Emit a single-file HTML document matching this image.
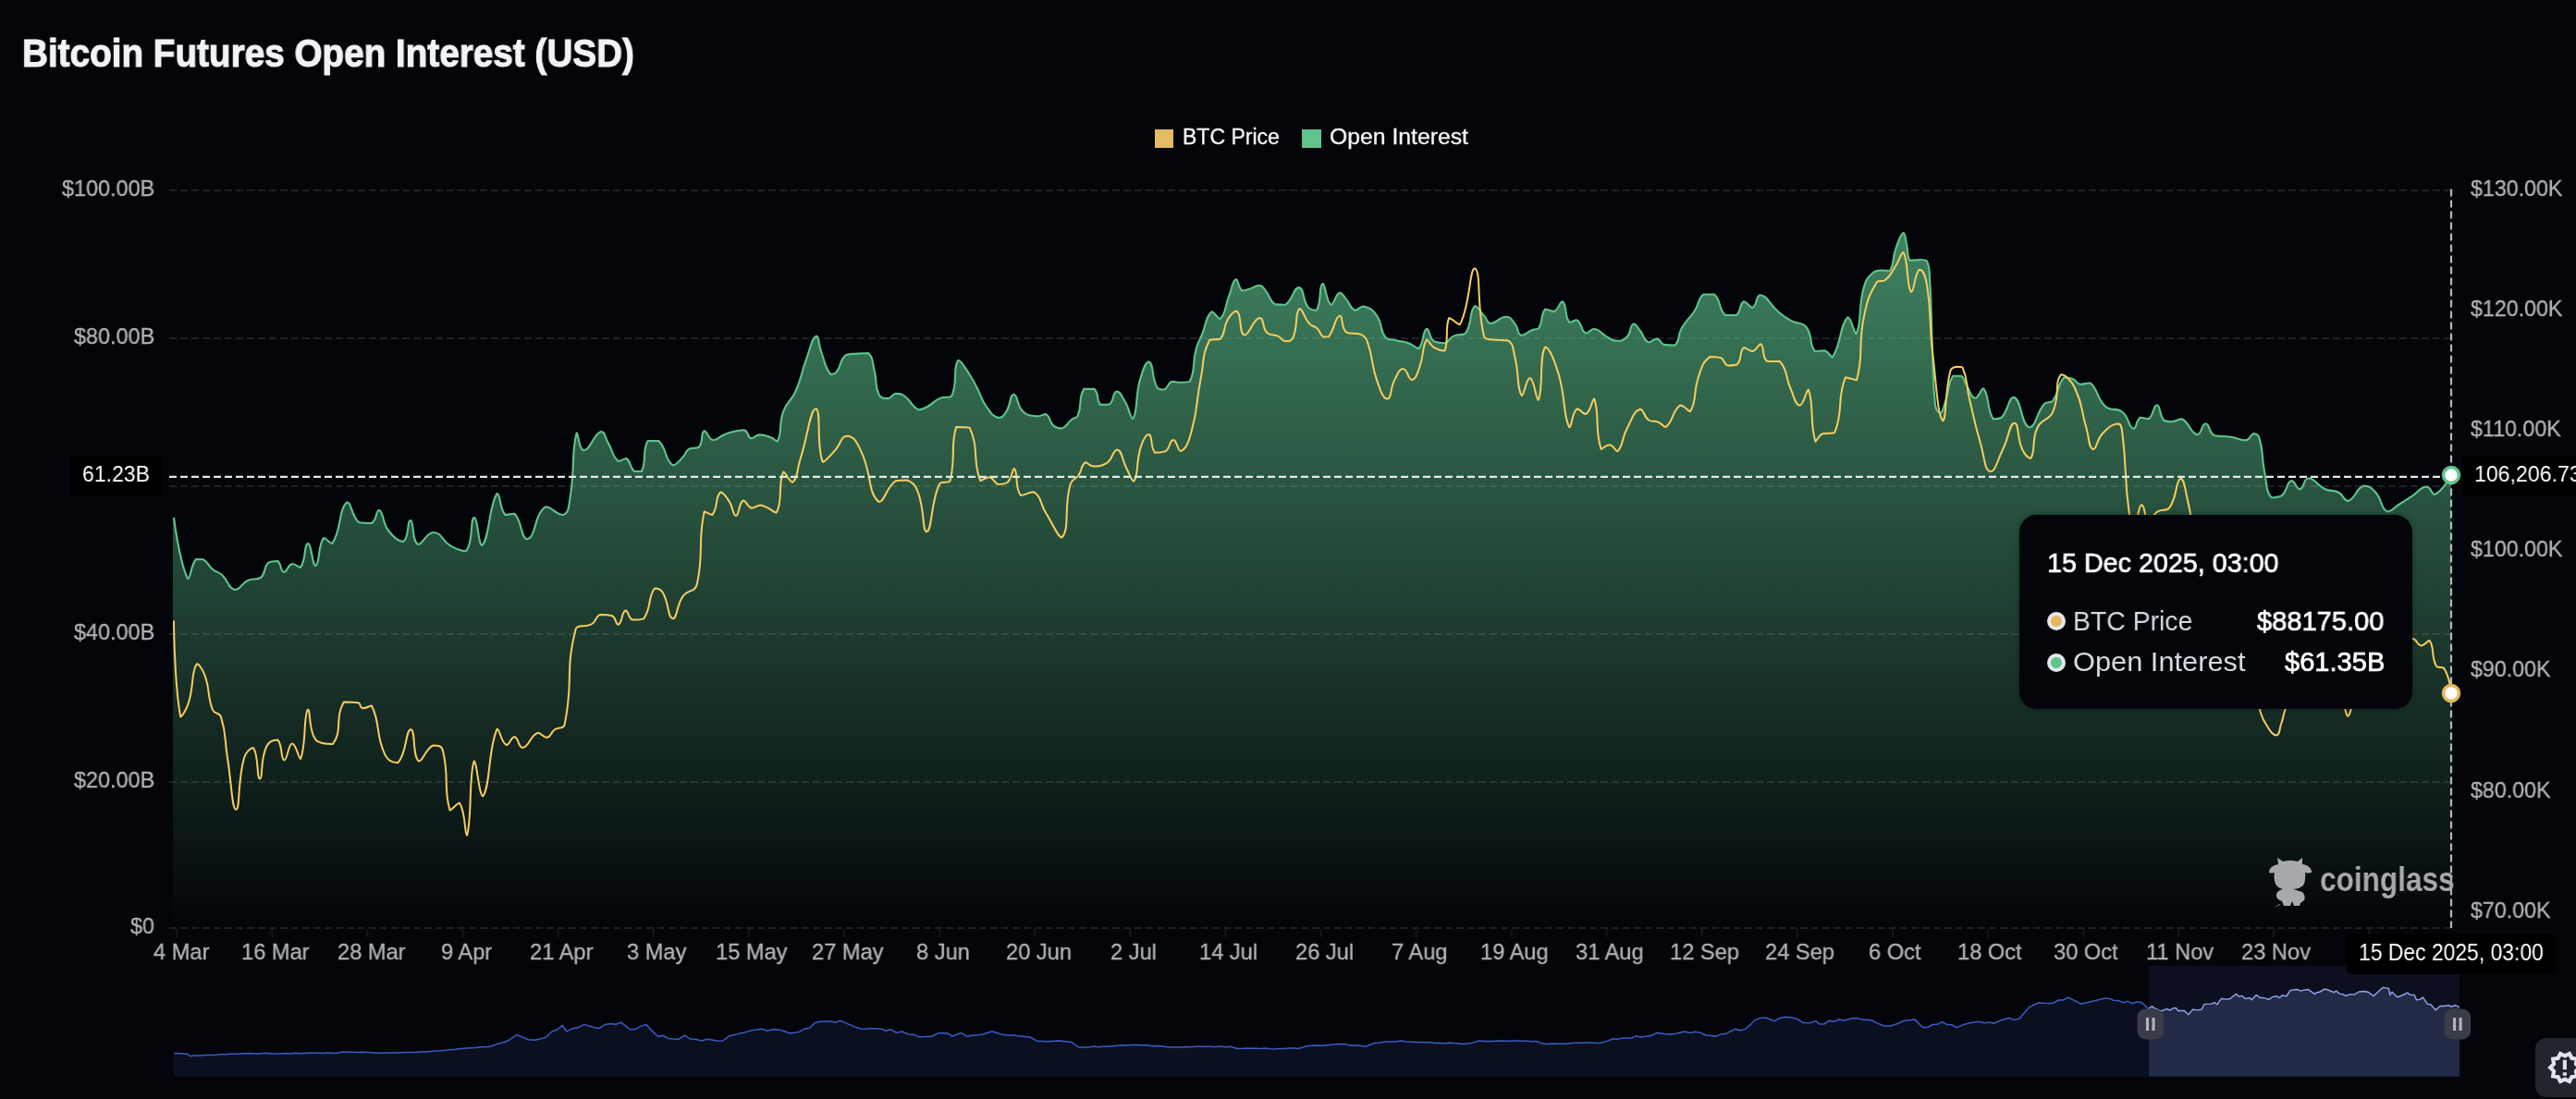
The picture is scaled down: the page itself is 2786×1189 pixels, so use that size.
<!DOCTYPE html>
<html><head><meta charset="utf-8"><style>
html,body{margin:0;padding:0;background:#03050a;width:2786px;height:1189px;overflow:hidden;position:relative;}
*{box-sizing:border-box;}
.t{position:absolute;font-family:"Liberation Sans",sans-serif;white-space:nowrap;line-height:1;will-change:transform;}
</style></head><body>
<svg width="2786" height="1189" viewBox="0 0 2786 1189" style="position:absolute;left:0;top:0"><defs><linearGradient id="oig" x1="0" y1="252" x2="0" y2="1004.2" gradientUnits="userSpaceOnUse"><stop offset="0" stop-color="#5ec48c" stop-opacity="0.66"/><stop offset="1" stop-color="#5ec48c" stop-opacity="0.0"/></linearGradient><clipPath id="selclip"><rect x="2324" y="1045" width="336.2" height="120"/></clipPath><clipPath id="unselclip"><rect x="180" y="1030" width="2144" height="140"/></clipPath></defs><line x1="183" y1="206" x2="2655" y2="206" stroke="#1e2025" stroke-width="2" stroke-dasharray="8 4"/><line x1="183" y1="366" x2="2655" y2="366" stroke="#1e2025" stroke-width="2" stroke-dasharray="8 4"/><line x1="183" y1="526" x2="2655" y2="526" stroke="#1e2025" stroke-width="2" stroke-dasharray="8 4"/><line x1="183" y1="686" x2="2655" y2="686" stroke="#1e2025" stroke-width="2" stroke-dasharray="8 4"/><line x1="183" y1="846" x2="2655" y2="846" stroke="#1e2025" stroke-width="2" stroke-dasharray="8 4"/><line x1="183" y1="1004" x2="2655" y2="1004" stroke="#1e2025" stroke-width="2" stroke-dasharray="8 4"/><line x1="191.2" y1="1005" x2="191.2" y2="1014" stroke="#14161a" stroke-width="2"/><line x1="294.3" y1="1005" x2="294.3" y2="1014" stroke="#14161a" stroke-width="2"/><line x1="397.4" y1="1005" x2="397.4" y2="1014" stroke="#14161a" stroke-width="2"/><line x1="500.5" y1="1005" x2="500.5" y2="1014" stroke="#14161a" stroke-width="2"/><line x1="603.6" y1="1005" x2="603.6" y2="1014" stroke="#14161a" stroke-width="2"/><line x1="706.7" y1="1005" x2="706.7" y2="1014" stroke="#14161a" stroke-width="2"/><line x1="809.8" y1="1005" x2="809.8" y2="1014" stroke="#14161a" stroke-width="2"/><line x1="912.9" y1="1005" x2="912.9" y2="1014" stroke="#14161a" stroke-width="2"/><line x1="1016.0" y1="1005" x2="1016.0" y2="1014" stroke="#14161a" stroke-width="2"/><line x1="1119.1" y1="1005" x2="1119.1" y2="1014" stroke="#14161a" stroke-width="2"/><line x1="1222.2" y1="1005" x2="1222.2" y2="1014" stroke="#14161a" stroke-width="2"/><line x1="1325.3" y1="1005" x2="1325.3" y2="1014" stroke="#14161a" stroke-width="2"/><line x1="1428.4" y1="1005" x2="1428.4" y2="1014" stroke="#14161a" stroke-width="2"/><line x1="1531.5" y1="1005" x2="1531.5" y2="1014" stroke="#14161a" stroke-width="2"/><line x1="1634.6" y1="1005" x2="1634.6" y2="1014" stroke="#14161a" stroke-width="2"/><line x1="1737.7" y1="1005" x2="1737.7" y2="1014" stroke="#14161a" stroke-width="2"/><line x1="1840.8" y1="1005" x2="1840.8" y2="1014" stroke="#14161a" stroke-width="2"/><line x1="1943.9" y1="1005" x2="1943.9" y2="1014" stroke="#14161a" stroke-width="2"/><line x1="2047.0" y1="1005" x2="2047.0" y2="1014" stroke="#14161a" stroke-width="2"/><line x1="2150.1" y1="1005" x2="2150.1" y2="1014" stroke="#14161a" stroke-width="2"/><line x1="2253.2" y1="1005" x2="2253.2" y2="1014" stroke="#14161a" stroke-width="2"/><line x1="2356.3" y1="1005" x2="2356.3" y2="1014" stroke="#14161a" stroke-width="2"/><line x1="2459.4" y1="1005" x2="2459.4" y2="1014" stroke="#14161a" stroke-width="2"/><line x1="2562.5" y1="1005" x2="2562.5" y2="1014" stroke="#14161a" stroke-width="2"/><path d="M188.0,560.0C188.0,560.0 194.2,609.4 203.2,626.2C206.2,626.2 205.8,612.7 212.0,605.0C214.2,605.0 216.8,605.0 220.0,605.3C225.8,608.9 224.4,611.4 230.0,616.0C234.4,619.7 235.7,618.1 240.0,622.0C247.7,629.1 246.3,636.3 254.0,638.0C260.3,638.0 260.4,631.5 268.0,628.0C274.4,625.0 277.1,628.0 282.0,625.0C288.1,619.7 284.3,614.7 290.0,609.0C293.3,607.0 296.4,607.0 300.0,607.0C304.9,609.9 302.8,618.2 307.0,619.0C310.8,619.0 310.9,611.4 316.0,610.0C319.9,610.0 322.7,614.0 325.0,614.0C331.2,605.9 328.8,588.5 333.0,588.0C337.0,588.0 337.6,612.0 341.4,612.0C346.1,610.3 343.4,590.8 350.0,582.0C352.4,582.0 357.0,588.0 359.4,588.0C369.7,572.3 366.0,550.8 375.4,543.3C380.3,543.3 379.5,557.7 388.0,565.0C392.8,566.0 396.9,566.0 402.0,566.0C407.9,562.5 406.4,552.0 410.0,552.0C415.4,554.4 412.9,564.7 420.0,574.0C425.9,581.7 430.6,586.0 436.0,586.0C442.6,583.0 440.2,563.0 444.0,563.0C448.2,563.8 445.0,585.4 452.0,589.0C457.5,589.0 460.6,576.0 469.0,576.0C478.3,576.4 477.4,584.9 487.5,590.7C494.9,595.0 500.0,596.3 504.0,596.3C512.6,585.8 508.0,561.7 512.8,560.0C516.8,560.0 517.2,590.0 521.5,590.0C529.6,581.5 528.9,545.6 537.7,534.0C541.4,534.0 539.8,549.3 546.4,557.0C549.2,557.0 553.5,555.7 556.5,555.7C565.5,565.5 563.1,583.2 570.4,583.2C579.9,581.1 577.3,556.9 590.0,548.3C596.6,548.3 601.9,557.0 608.9,557.0C615.0,555.2 614.8,549.3 616.3,540.4C622.2,505.0 617.7,489.2 623.7,468.4C625.4,468.4 626.0,487.2 631.6,487.2C639.1,486.8 641.5,469.6 650.0,467.0C654.6,467.0 654.1,473.0 657.8,479.3C663.5,489.0 661.7,493.1 668.7,499.0C671.5,499.0 674.3,496.0 677.4,496.0C682.9,499.5 680.4,505.3 686.0,510.0C688.7,510.0 692.6,510.0 694.0,510.0C699.9,496.7 694.0,489.2 700.6,477.0C703.0,477.0 708.6,477.0 712.4,477.0C722.1,486.5 718.6,497.3 727.6,503.3C731.7,503.3 733.7,499.5 738.6,494.6C742.4,490.8 740.7,488.6 745.0,485.9C749.4,483.7 752.8,485.9 756.0,483.7C761.2,477.6 757.3,468.3 761.7,466.2C765.0,466.2 765.8,475.3 771.3,476.2C777.1,476.2 777.5,472.0 784.4,469.7C794.2,466.5 795.8,465.2 804.7,465.2C809.8,466.0 807.8,472.9 812.3,474.3C816.0,474.3 816.5,470.8 821.1,470.4C826.7,470.4 827.2,470.7 832.6,472.7C837.0,474.3 839.2,477.6 840.8,477.6C846.5,466.8 841.7,460.3 847.3,444.9C851.5,433.3 855.4,434.9 860.4,423.5C867.7,407.0 865.6,406.1 871.9,389.1C876.7,376.1 877.8,366.0 882.7,363.6C886.0,363.6 885.1,372.4 888.3,381.0C892.8,393.1 891.7,396.5 898.1,404.9C899.9,404.9 902.6,404.9 904.7,402.3C910.8,394.6 907.5,390.2 914.5,384.2C919.0,382.6 921.0,383.2 927.6,382.6C933.3,382.1 935.8,382.0 939.1,382.0C944.8,387.7 943.2,391.1 945.6,400.6C948.9,413.5 945.6,415.9 950.5,426.8C952.6,431.1 955.6,431.1 960.4,431.1C964.7,430.9 964.2,426.4 968.6,425.8C973.2,425.8 974.4,425.8 978.4,428.5C986.6,434.3 984.9,439.4 993.1,443.2C997.2,443.2 998.4,442.4 1003.0,440.0C1009.9,436.3 1009.0,434.2 1016.1,431.1C1022.1,428.5 1026.6,431.1 1029.2,428.5C1036.4,413.1 1029.9,397.4 1036.4,389.8C1039.7,389.8 1043.2,397.2 1048.8,405.5C1053.5,412.5 1053.1,412.8 1057.0,420.3C1062.1,430.1 1060.5,431.2 1066.9,440.0C1072.0,447.1 1073.3,450.3 1080.0,452.0C1083.9,452.0 1085.4,449.8 1088.2,445.5C1093.6,437.2 1091.9,426.9 1096.4,426.8C1100.9,426.8 1099.2,438.3 1106.2,444.9C1111.7,450.1 1113.7,449.4 1121.5,450.4C1126.3,450.4 1127.7,448.1 1131.3,448.1C1136.7,451.3 1134.2,456.2 1139.5,460.9C1142.9,463.5 1144.8,463.5 1148.7,463.5C1154.6,461.3 1153.6,458.2 1159.1,453.7C1162.1,451.3 1164.3,453.1 1165.7,449.7C1170.9,436.7 1165.8,431.3 1172.3,420.9C1174.8,420.9 1180.2,420.9 1183.7,420.9C1189.2,426.1 1185.0,432.6 1190.3,437.9C1193.2,437.9 1196.8,437.9 1200.1,437.3C1205.4,432.9 1203.2,424.4 1207.6,423.5C1211.4,423.5 1213.0,428.1 1216.5,434.0C1221.8,442.9 1222.6,453.0 1225.3,453.0C1230.8,445.3 1227.2,431.4 1232.9,411.1C1235.9,400.6 1238.7,391.4 1242.7,391.4C1248.0,393.7 1245.0,407.5 1251.5,419.3C1253.2,421.5 1256.0,421.5 1259.1,421.5C1263.9,419.5 1262.4,414.8 1267.3,412.7C1271.4,412.7 1272.2,413.7 1277.1,413.7C1282.0,413.7 1285.1,413.7 1286.9,412.7C1293.3,398.9 1289.1,395.2 1293.5,378.3C1295.7,369.8 1296.6,370.0 1300.0,361.9C1305.1,349.5 1303.7,343.2 1310.5,337.3C1313.5,337.3 1316.8,344.9 1319.7,344.9C1326.3,338.6 1324.4,332.0 1329.5,319.3C1332.9,310.7 1332.7,303.7 1336.7,302.3C1339.6,302.3 1338.8,311.0 1343.3,314.4C1345.8,314.4 1347.1,313.9 1350.8,312.8C1356.6,311.1 1357.0,308.8 1362.3,308.8C1366.0,309.1 1366.1,311.1 1368.8,314.4C1374.3,321.2 1372.2,324.4 1378.7,329.1C1382.9,329.8 1385.9,329.8 1390.1,329.8C1399.0,323.7 1398.7,311.1 1404.9,311.1C1411.0,311.7 1408.0,323.7 1414.7,332.4C1417.5,335.7 1421.9,335.7 1423.9,335.7C1429.8,326.1 1426.1,308.5 1430.4,306.9C1433.9,306.9 1433.9,326.8 1439.5,329.8C1443.1,329.8 1443.8,318.6 1448.9,316.8C1452.1,316.8 1452.7,320.1 1456.0,323.9C1461.0,329.6 1459.9,333.5 1465.5,335.7C1469.3,335.7 1470.5,331.4 1474.9,331.4C1482.3,333.3 1484.3,334.7 1489.1,341.6C1496.1,351.7 1491.4,356.2 1498.6,365.3C1502.0,368.4 1504.5,366.9 1510.4,368.4C1517.5,370.1 1517.8,369.2 1524.6,371.7C1529.7,373.6 1531.1,377.1 1534.1,377.1C1540.4,371.7 1538.1,358.1 1543.1,355.8C1546.4,355.8 1545.2,365.0 1550.7,369.3C1554.9,371.2 1557.2,371.2 1562.5,371.2C1567.9,369.8 1566.6,366.1 1572.0,363.6C1577.9,360.8 1581.5,363.6 1585.0,360.5C1593.1,349.1 1588.3,337.4 1595.1,331.0C1598.3,331.0 1600.2,336.2 1605.1,341.6C1608.8,345.6 1607.7,349.7 1612.2,349.9C1619.5,349.9 1620.9,342.8 1628.7,342.8C1633.9,342.8 1634.5,345.4 1638.2,349.9C1642.8,355.5 1640.3,361.0 1645.3,362.9C1649.8,362.9 1651.0,359.5 1657.1,357.0C1660.5,355.6 1662.4,357.0 1664.2,355.1C1669.5,346.7 1665.6,340.8 1671.3,334.5C1673.9,334.5 1677.0,336.9 1680.8,336.9C1686.2,334.5 1686.7,326.2 1689.8,326.2C1695.0,329.9 1691.5,341.3 1697.3,348.7C1699.4,348.7 1702.6,346.3 1705.6,346.3C1711.5,350.2 1709.2,357.6 1715.1,360.5C1718.7,360.5 1720.0,355.8 1724.5,355.8C1731.2,356.9 1730.8,360.4 1737.5,364.1C1742.6,366.9 1742.8,368.7 1748.2,368.8C1753.8,368.8 1755.5,368.6 1759.5,364.6C1764.7,359.4 1762.3,352.6 1766.6,350.4C1769.4,350.4 1770.6,353.6 1773.7,357.5C1778.6,363.6 1777.0,367.8 1782.6,370.5C1786.2,370.5 1787.7,366.5 1792.1,366.5C1796.3,367.1 1795.3,371.3 1799.7,372.9C1805.0,373.6 1808.0,373.6 1811.5,373.6C1817.4,368.1 1813.8,363.7 1818.6,355.2C1824.4,345.0 1826.4,346.1 1832.8,336.2C1838.2,327.8 1835.6,324.1 1842.3,318.5C1846.2,318.5 1850.4,318.5 1854.1,318.5C1862.2,326.2 1857.8,333.3 1865.9,341.0C1869.6,341.0 1873.6,341.0 1877.7,341.0C1883.6,336.7 1880.7,328.8 1886.0,326.3C1889.6,326.3 1891.8,332.7 1895.5,332.7C1900.7,330.6 1898.6,319.2 1903.8,319.2C1912.2,320.4 1912.8,328.4 1922.7,336.7C1929.4,342.3 1929.3,342.6 1936.9,346.9C1944.7,351.3 1948.4,347.5 1953.5,354.0C1961.4,364.0 1955.7,370.9 1962.9,380.0C1965.7,380.0 1968.9,379.3 1973.6,379.3C1978.4,380.9 1979.4,386.4 1981.8,386.4C1991.8,371.8 1989.4,352.1 1998.4,343.3C2002.3,343.3 2005.1,361.1 2007.6,361.1C2013.9,349.1 2009.0,334.5 2016.0,310.1C2018.7,300.9 2020.2,300.0 2027.0,294.0C2030.2,292.5 2031.5,292.8 2036.0,292.5C2040.0,292.5 2042.2,293.0 2044.0,293.0C2049.2,284.6 2046.1,281.2 2050.0,270.0C2053.3,260.7 2054.8,253.8 2058.5,252.0C2060.8,252.0 2060.5,257.9 2062.0,264.0C2064.1,272.9 2062.0,276.6 2065.7,282.0C2068.2,282.0 2070.9,281.0 2076.0,281.0C2080.0,281.1 2082.3,281.0 2084.0,282.4C2087.0,288.9 2086.5,291.1 2087.0,300.0C2089.5,339.9 2088.3,340.0 2090.0,380.0C2091.3,409.0 2090.0,409.7 2093.0,438.0C2093.7,443.2 2096.3,447.0 2098.6,447.0C2102.1,445.3 2102.1,439.8 2104.6,432.2C2108.8,419.6 2105.9,416.2 2112.0,406.7C2114.1,406.7 2117.9,406.7 2121.1,406.7C2125.4,409.7 2123.9,412.1 2127.1,417.2C2131.4,424.1 2131.2,429.9 2136.1,430.7C2140.2,430.7 2142.3,420.2 2145.1,420.2C2152.1,428.2 2147.9,440.7 2155.6,453.2C2157.6,453.2 2161.7,453.2 2164.6,451.7C2172.9,443.1 2171.9,429.8 2178.1,429.8C2186.9,432.9 2185.7,460.3 2194.7,462.2C2202.2,462.2 2201.5,447.6 2211.2,436.7C2214.2,433.7 2217.6,436.7 2220.2,433.7C2228.1,423.0 2224.3,417.3 2232.2,408.2C2234.8,408.2 2237.1,408.2 2241.2,409.7C2246.1,411.7 2245.3,414.6 2250.2,415.7C2255.0,415.7 2257.2,414.2 2260.7,414.2C2270.7,423.1 2266.6,430.0 2277.2,439.7C2283.9,445.7 2288.2,440.1 2295.3,445.7C2303.3,452.1 2301.4,461.9 2307.3,463.7C2311.2,463.7 2309.8,454.9 2314.8,451.7C2318.0,451.7 2320.7,453.2 2323.8,453.2C2329.7,448.8 2328.7,438.2 2332.8,438.2C2337.0,438.6 2334.8,448.7 2340.3,454.7C2343.1,456.2 2344.9,456.2 2349.3,456.2C2354.6,455.8 2355.5,453.2 2359.8,453.2C2369.1,458.0 2368.5,468.7 2376.4,470.2C2381.4,470.2 2381.0,458.2 2385.5,458.2C2390.1,458.4 2388.3,467.6 2394.6,471.0C2401.9,472.8 2403.8,471.4 2412.8,472.8C2421.1,474.1 2421.8,476.4 2429.2,476.4C2434.1,475.7 2433.4,469.6 2437.5,469.1C2440.6,469.1 2442.6,470.8 2443.7,474.6C2448.5,491.7 2445.6,493.0 2449.2,511.0C2452.0,524.8 2449.9,529.2 2456.4,538.3C2459.0,538.3 2463.4,538.3 2467.4,536.4C2474.4,530.6 2472.3,522.3 2478.3,520.1C2482.3,520.1 2483.2,529.2 2487.4,529.2C2492.3,528.5 2491.0,517.5 2496.5,517.5C2504.6,517.5 2505.0,524.7 2514.7,529.2C2521.4,532.3 2522.8,529.5 2529.2,532.8C2535.1,535.8 2534.4,541.9 2539.4,541.9C2548.1,539.6 2547.3,528.3 2556.5,525.5C2562.2,525.5 2564.5,527.5 2569.3,532.8C2577.2,541.5 2574.1,549.6 2582.0,553.5C2587.0,553.5 2588.5,549.6 2595.0,545.5C2602.2,541.0 2602.2,540.9 2609.3,536.3C2616.9,531.4 2617.3,526.9 2624.5,526.5C2629.3,526.5 2629.2,535.0 2633.3,535.0C2642.5,530.7 2651.0,514.0 2651.0,514.0L2651,1000.5 L187,1000.5 L187,560 Z" fill="url(#oig)"/><path d="M188.0,560.0C188.0,560.0 194.2,609.4 203.2,626.2C206.2,626.2 205.8,612.7 212.0,605.0C214.2,605.0 216.8,605.0 220.0,605.3C225.8,608.9 224.4,611.4 230.0,616.0C234.4,619.7 235.7,618.1 240.0,622.0C247.7,629.1 246.3,636.3 254.0,638.0C260.3,638.0 260.4,631.5 268.0,628.0C274.4,625.0 277.1,628.0 282.0,625.0C288.1,619.7 284.3,614.7 290.0,609.0C293.3,607.0 296.4,607.0 300.0,607.0C304.9,609.9 302.8,618.2 307.0,619.0C310.8,619.0 310.9,611.4 316.0,610.0C319.9,610.0 322.7,614.0 325.0,614.0C331.2,605.9 328.8,588.5 333.0,588.0C337.0,588.0 337.6,612.0 341.4,612.0C346.1,610.3 343.4,590.8 350.0,582.0C352.4,582.0 357.0,588.0 359.4,588.0C369.7,572.3 366.0,550.8 375.4,543.3C380.3,543.3 379.5,557.7 388.0,565.0C392.8,566.0 396.9,566.0 402.0,566.0C407.9,562.5 406.4,552.0 410.0,552.0C415.4,554.4 412.9,564.7 420.0,574.0C425.9,581.7 430.6,586.0 436.0,586.0C442.6,583.0 440.2,563.0 444.0,563.0C448.2,563.8 445.0,585.4 452.0,589.0C457.5,589.0 460.6,576.0 469.0,576.0C478.3,576.4 477.4,584.9 487.5,590.7C494.9,595.0 500.0,596.3 504.0,596.3C512.6,585.8 508.0,561.7 512.8,560.0C516.8,560.0 517.2,590.0 521.5,590.0C529.6,581.5 528.9,545.6 537.7,534.0C541.4,534.0 539.8,549.3 546.4,557.0C549.2,557.0 553.5,555.7 556.5,555.7C565.5,565.5 563.1,583.2 570.4,583.2C579.9,581.1 577.3,556.9 590.0,548.3C596.6,548.3 601.9,557.0 608.9,557.0C615.0,555.2 614.8,549.3 616.3,540.4C622.2,505.0 617.7,489.2 623.7,468.4C625.4,468.4 626.0,487.2 631.6,487.2C639.1,486.8 641.5,469.6 650.0,467.0C654.6,467.0 654.1,473.0 657.8,479.3C663.5,489.0 661.7,493.1 668.7,499.0C671.5,499.0 674.3,496.0 677.4,496.0C682.9,499.5 680.4,505.3 686.0,510.0C688.7,510.0 692.6,510.0 694.0,510.0C699.9,496.7 694.0,489.2 700.6,477.0C703.0,477.0 708.6,477.0 712.4,477.0C722.1,486.5 718.6,497.3 727.6,503.3C731.7,503.3 733.7,499.5 738.6,494.6C742.4,490.8 740.7,488.6 745.0,485.9C749.4,483.7 752.8,485.9 756.0,483.7C761.2,477.6 757.3,468.3 761.7,466.2C765.0,466.2 765.8,475.3 771.3,476.2C777.1,476.2 777.5,472.0 784.4,469.7C794.2,466.5 795.8,465.2 804.7,465.2C809.8,466.0 807.8,472.9 812.3,474.3C816.0,474.3 816.5,470.8 821.1,470.4C826.7,470.4 827.2,470.7 832.6,472.7C837.0,474.3 839.2,477.6 840.8,477.6C846.5,466.8 841.7,460.3 847.3,444.9C851.5,433.3 855.4,434.9 860.4,423.5C867.7,407.0 865.6,406.1 871.9,389.1C876.7,376.1 877.8,366.0 882.7,363.6C886.0,363.6 885.1,372.4 888.3,381.0C892.8,393.1 891.7,396.5 898.1,404.9C899.9,404.9 902.6,404.9 904.7,402.3C910.8,394.6 907.5,390.2 914.5,384.2C919.0,382.6 921.0,383.2 927.6,382.6C933.3,382.1 935.8,382.0 939.1,382.0C944.8,387.7 943.2,391.1 945.6,400.6C948.9,413.5 945.6,415.9 950.5,426.8C952.6,431.1 955.6,431.1 960.4,431.1C964.7,430.9 964.2,426.4 968.6,425.8C973.2,425.8 974.4,425.8 978.4,428.5C986.6,434.3 984.9,439.4 993.1,443.2C997.2,443.2 998.4,442.4 1003.0,440.0C1009.9,436.3 1009.0,434.2 1016.1,431.1C1022.1,428.5 1026.6,431.1 1029.2,428.5C1036.4,413.1 1029.9,397.4 1036.4,389.8C1039.7,389.8 1043.2,397.2 1048.8,405.5C1053.5,412.5 1053.1,412.8 1057.0,420.3C1062.1,430.1 1060.5,431.2 1066.9,440.0C1072.0,447.1 1073.3,450.3 1080.0,452.0C1083.9,452.0 1085.4,449.8 1088.2,445.5C1093.6,437.2 1091.9,426.9 1096.4,426.8C1100.9,426.8 1099.2,438.3 1106.2,444.9C1111.7,450.1 1113.7,449.4 1121.5,450.4C1126.3,450.4 1127.7,448.1 1131.3,448.1C1136.7,451.3 1134.2,456.2 1139.5,460.9C1142.9,463.5 1144.8,463.5 1148.7,463.5C1154.6,461.3 1153.6,458.2 1159.1,453.7C1162.1,451.3 1164.3,453.1 1165.7,449.7C1170.9,436.7 1165.8,431.3 1172.3,420.9C1174.8,420.9 1180.2,420.9 1183.7,420.9C1189.2,426.1 1185.0,432.6 1190.3,437.9C1193.2,437.9 1196.8,437.9 1200.1,437.3C1205.4,432.9 1203.2,424.4 1207.6,423.5C1211.4,423.5 1213.0,428.1 1216.5,434.0C1221.8,442.9 1222.6,453.0 1225.3,453.0C1230.8,445.3 1227.2,431.4 1232.9,411.1C1235.9,400.6 1238.7,391.4 1242.7,391.4C1248.0,393.7 1245.0,407.5 1251.5,419.3C1253.2,421.5 1256.0,421.5 1259.1,421.5C1263.9,419.5 1262.4,414.8 1267.3,412.7C1271.4,412.7 1272.2,413.7 1277.1,413.7C1282.0,413.7 1285.1,413.7 1286.9,412.7C1293.3,398.9 1289.1,395.2 1293.5,378.3C1295.7,369.8 1296.6,370.0 1300.0,361.9C1305.1,349.5 1303.7,343.2 1310.5,337.3C1313.5,337.3 1316.8,344.9 1319.7,344.9C1326.3,338.6 1324.4,332.0 1329.5,319.3C1332.9,310.7 1332.7,303.7 1336.7,302.3C1339.6,302.3 1338.8,311.0 1343.3,314.4C1345.8,314.4 1347.1,313.9 1350.8,312.8C1356.6,311.1 1357.0,308.8 1362.3,308.8C1366.0,309.1 1366.1,311.1 1368.8,314.4C1374.3,321.2 1372.2,324.4 1378.7,329.1C1382.9,329.8 1385.9,329.8 1390.1,329.8C1399.0,323.7 1398.7,311.1 1404.9,311.1C1411.0,311.7 1408.0,323.7 1414.7,332.4C1417.5,335.7 1421.9,335.7 1423.9,335.7C1429.8,326.1 1426.1,308.5 1430.4,306.9C1433.9,306.9 1433.9,326.8 1439.5,329.8C1443.1,329.8 1443.8,318.6 1448.9,316.8C1452.1,316.8 1452.7,320.1 1456.0,323.9C1461.0,329.6 1459.9,333.5 1465.5,335.7C1469.3,335.7 1470.5,331.4 1474.9,331.4C1482.3,333.3 1484.3,334.7 1489.1,341.6C1496.1,351.7 1491.4,356.2 1498.6,365.3C1502.0,368.4 1504.5,366.9 1510.4,368.4C1517.5,370.1 1517.8,369.2 1524.6,371.7C1529.7,373.6 1531.1,377.1 1534.1,377.1C1540.4,371.7 1538.1,358.1 1543.1,355.8C1546.4,355.8 1545.2,365.0 1550.7,369.3C1554.9,371.2 1557.2,371.2 1562.5,371.2C1567.9,369.8 1566.6,366.1 1572.0,363.6C1577.9,360.8 1581.5,363.6 1585.0,360.5C1593.1,349.1 1588.3,337.4 1595.1,331.0C1598.3,331.0 1600.2,336.2 1605.1,341.6C1608.8,345.6 1607.7,349.7 1612.2,349.9C1619.5,349.9 1620.9,342.8 1628.7,342.8C1633.9,342.8 1634.5,345.4 1638.2,349.9C1642.8,355.5 1640.3,361.0 1645.3,362.9C1649.8,362.9 1651.0,359.5 1657.1,357.0C1660.5,355.6 1662.4,357.0 1664.2,355.1C1669.5,346.7 1665.6,340.8 1671.3,334.5C1673.9,334.5 1677.0,336.9 1680.8,336.9C1686.2,334.5 1686.7,326.2 1689.8,326.2C1695.0,329.9 1691.5,341.3 1697.3,348.7C1699.4,348.7 1702.6,346.3 1705.6,346.3C1711.5,350.2 1709.2,357.6 1715.1,360.5C1718.7,360.5 1720.0,355.8 1724.5,355.8C1731.2,356.9 1730.8,360.4 1737.5,364.1C1742.6,366.9 1742.8,368.7 1748.2,368.8C1753.8,368.8 1755.5,368.6 1759.5,364.6C1764.7,359.4 1762.3,352.6 1766.6,350.4C1769.4,350.4 1770.6,353.6 1773.7,357.5C1778.6,363.6 1777.0,367.8 1782.6,370.5C1786.2,370.5 1787.7,366.5 1792.1,366.5C1796.3,367.1 1795.3,371.3 1799.7,372.9C1805.0,373.6 1808.0,373.6 1811.5,373.6C1817.4,368.1 1813.8,363.7 1818.6,355.2C1824.4,345.0 1826.4,346.1 1832.8,336.2C1838.2,327.8 1835.6,324.1 1842.3,318.5C1846.2,318.5 1850.4,318.5 1854.1,318.5C1862.2,326.2 1857.8,333.3 1865.9,341.0C1869.6,341.0 1873.6,341.0 1877.7,341.0C1883.6,336.7 1880.7,328.8 1886.0,326.3C1889.6,326.3 1891.8,332.7 1895.5,332.7C1900.7,330.6 1898.6,319.2 1903.8,319.2C1912.2,320.4 1912.8,328.4 1922.7,336.7C1929.4,342.3 1929.3,342.6 1936.9,346.9C1944.7,351.3 1948.4,347.5 1953.5,354.0C1961.4,364.0 1955.7,370.9 1962.9,380.0C1965.7,380.0 1968.9,379.3 1973.6,379.3C1978.4,380.9 1979.4,386.4 1981.8,386.4C1991.8,371.8 1989.4,352.1 1998.4,343.3C2002.3,343.3 2005.1,361.1 2007.6,361.1C2013.9,349.1 2009.0,334.5 2016.0,310.1C2018.7,300.9 2020.2,300.0 2027.0,294.0C2030.2,292.5 2031.5,292.8 2036.0,292.5C2040.0,292.5 2042.2,293.0 2044.0,293.0C2049.2,284.6 2046.1,281.2 2050.0,270.0C2053.3,260.7 2054.8,253.8 2058.5,252.0C2060.8,252.0 2060.5,257.9 2062.0,264.0C2064.1,272.9 2062.0,276.6 2065.7,282.0C2068.2,282.0 2070.9,281.0 2076.0,281.0C2080.0,281.1 2082.3,281.0 2084.0,282.4C2087.0,288.9 2086.5,291.1 2087.0,300.0C2089.5,339.9 2088.3,340.0 2090.0,380.0C2091.3,409.0 2090.0,409.7 2093.0,438.0C2093.7,443.2 2096.3,447.0 2098.6,447.0C2102.1,445.3 2102.1,439.8 2104.6,432.2C2108.8,419.6 2105.9,416.2 2112.0,406.7C2114.1,406.7 2117.9,406.7 2121.1,406.7C2125.4,409.7 2123.9,412.1 2127.1,417.2C2131.4,424.1 2131.2,429.9 2136.1,430.7C2140.2,430.7 2142.3,420.2 2145.1,420.2C2152.1,428.2 2147.9,440.7 2155.6,453.2C2157.6,453.2 2161.7,453.2 2164.6,451.7C2172.9,443.1 2171.9,429.8 2178.1,429.8C2186.9,432.9 2185.7,460.3 2194.7,462.2C2202.2,462.2 2201.5,447.6 2211.2,436.7C2214.2,433.7 2217.6,436.7 2220.2,433.7C2228.1,423.0 2224.3,417.3 2232.2,408.2C2234.8,408.2 2237.1,408.2 2241.2,409.7C2246.1,411.7 2245.3,414.6 2250.2,415.7C2255.0,415.7 2257.2,414.2 2260.7,414.2C2270.7,423.1 2266.6,430.0 2277.2,439.7C2283.9,445.7 2288.2,440.1 2295.3,445.7C2303.3,452.1 2301.4,461.9 2307.3,463.7C2311.2,463.7 2309.8,454.9 2314.8,451.7C2318.0,451.7 2320.7,453.2 2323.8,453.2C2329.7,448.8 2328.7,438.2 2332.8,438.2C2337.0,438.6 2334.8,448.7 2340.3,454.7C2343.1,456.2 2344.9,456.2 2349.3,456.2C2354.6,455.8 2355.5,453.2 2359.8,453.2C2369.1,458.0 2368.5,468.7 2376.4,470.2C2381.4,470.2 2381.0,458.2 2385.5,458.2C2390.1,458.4 2388.3,467.6 2394.6,471.0C2401.9,472.8 2403.8,471.4 2412.8,472.8C2421.1,474.1 2421.8,476.4 2429.2,476.4C2434.1,475.7 2433.4,469.6 2437.5,469.1C2440.6,469.1 2442.6,470.8 2443.7,474.6C2448.5,491.7 2445.6,493.0 2449.2,511.0C2452.0,524.8 2449.9,529.2 2456.4,538.3C2459.0,538.3 2463.4,538.3 2467.4,536.4C2474.4,530.6 2472.3,522.3 2478.3,520.1C2482.3,520.1 2483.2,529.2 2487.4,529.2C2492.3,528.5 2491.0,517.5 2496.5,517.5C2504.6,517.5 2505.0,524.7 2514.7,529.2C2521.4,532.3 2522.8,529.5 2529.2,532.8C2535.1,535.8 2534.4,541.9 2539.4,541.9C2548.1,539.6 2547.3,528.3 2556.5,525.5C2562.2,525.5 2564.5,527.5 2569.3,532.8C2577.2,541.5 2574.1,549.6 2582.0,553.5C2587.0,553.5 2588.5,549.6 2595.0,545.5C2602.2,541.0 2602.2,540.9 2609.3,536.3C2616.9,531.4 2617.3,526.9 2624.5,526.5C2629.3,526.5 2629.2,535.0 2633.3,535.0C2642.5,530.7 2651.0,514.0 2651.0,514.0" fill="none" stroke="#5ec48c" stroke-width="2.1" stroke-linejoin="round"/><path d="M188.0,671.4C188.0,671.4 188.4,737.8 195.2,775.6C196.4,775.6 201.4,768.5 204.0,760.0C210.2,739.8 206.3,728.4 212.8,718.3C215.3,718.3 219.3,724.3 222.0,732.0C227.9,749.2 223.6,751.5 230.0,768.0C232.1,773.3 237.3,770.2 239.0,775.6C245.3,796.2 242.4,797.8 246.0,820.0C250.5,847.9 250.8,875.7 255.3,875.7C259.8,875.7 256.6,846.4 264.0,820.0C266.0,813.0 271.4,809.0 274.0,809.0C279.9,816.8 277.5,842.4 281.0,842.4C284.5,842.1 281.2,823.0 288.0,808.0C290.7,802.0 296.3,800.4 300.0,800.4C306.0,804.9 303.1,821.3 307.4,822.4C311.1,822.4 311.5,804.8 316.0,804.4C320.3,804.4 322.8,821.0 325.0,821.0C331.3,807.3 328.0,773.8 333.0,767.5C336.2,767.5 333.0,788.4 341.4,800.4C346.3,805.0 355.6,805.0 360.0,805.0C370.9,790.5 361.7,776.3 372.0,759.5C375.4,759.5 380.7,759.5 387.4,760.3C390.7,761.4 388.9,765.6 392.0,766.3C396.2,766.3 400.1,763.5 402.0,763.5C412.2,784.6 405.4,792.7 416.3,816.4C419.6,823.6 426.1,825.2 430.3,825.2C440.1,815.7 438.4,789.6 444.3,789.2C449.7,789.2 445.7,818.4 453.0,823.6C457.7,823.6 459.8,810.6 468.4,806.4C472.6,806.4 477.4,806.4 478.7,811.2C486.5,841.2 479.0,852.7 486.6,876.7C488.1,876.7 494.5,868.8 497.0,868.8C503.7,878.7 502.6,903.8 505.0,903.8C510.5,888.1 506.9,837.7 512.8,823.4C515.6,823.4 518.1,861.4 522.4,861.4C530.6,850.0 527.7,810.3 537.7,788.5C540.4,788.5 541.9,803.3 547.7,806.0C551.3,806.0 552.5,797.2 556.5,797.2C561.2,798.0 560.3,809.0 565.2,809.0C572.8,807.7 572.6,796.5 581.4,792.8C585.7,792.8 586.9,798.0 591.4,798.0C596.2,797.1 595.1,792.9 600.0,789.3C604.7,785.9 609.4,789.3 610.6,784.0C620.8,735.0 610.6,726.6 622.8,680.2C625.0,675.0 632.7,679.4 640.3,675.0C645.8,671.8 643.5,667.1 649.0,664.9C654.4,664.9 656.8,664.9 662.0,666.2C666.7,668.8 665.7,675.8 668.7,675.8C673.0,674.1 672.2,662.0 676.6,660.5C679.8,660.5 679.1,668.4 684.0,670.6C688.9,670.6 693.1,670.6 696.2,669.3C705.1,656.7 700.0,647.5 708.0,636.5C710.2,636.5 714.3,637.0 716.7,641.0C724.1,653.4 721.8,668.2 727.6,669.3C732.7,669.3 731.1,655.8 738.6,645.2C744.2,637.2 751.5,641.4 753.8,632.1C761.7,595.5 754.3,587.1 761.7,553.5C762.6,553.5 768.1,557.0 770.4,557.0C776.8,549.3 773.2,537.3 779.2,532.6C782.4,532.6 785.0,536.9 788.8,542.6C793.4,549.5 792.3,557.9 795.9,557.9C799.8,557.6 798.7,544.0 803.8,541.5C807.2,541.5 807.8,548.4 812.9,549.7C817.3,549.7 818.0,546.4 822.8,546.4C831.5,548.0 836.2,554.6 839.8,554.6C847.3,541.9 840.8,522.7 847.3,510.4C849.5,510.4 853.9,521.8 857.2,521.8C862.9,517.7 861.5,509.6 865.4,497.3C874.1,469.8 876.3,442.2 882.4,442.2C888.6,442.9 882.4,482.7 889.9,499.9C892.3,499.9 896.8,494.0 903.0,487.4C909.9,479.9 909.3,471.7 916.1,471.7C923.3,471.7 926.3,477.8 930.9,487.4C943.5,513.5 937.9,532.1 950.5,543.1C956.7,543.1 957.8,528.3 968.6,520.2C973.4,519.6 976.5,519.6 981.7,519.6C988.8,523.4 990.1,525.1 993.1,533.3C1000.4,553.0 997.2,575.3 1002.3,575.3C1008.7,572.6 1005.8,546.1 1016.1,523.5C1018.4,520.2 1026.0,523.5 1027.5,520.2C1034.1,494.6 1027.5,484.8 1034.1,461.9C1036.2,461.9 1046.2,461.9 1048.8,462.9C1059.3,486.2 1051.3,497.6 1060.3,520.2C1061.9,520.2 1065.6,516.3 1070.1,516.3C1075.5,517.4 1074.5,522.6 1080.0,524.1C1084.4,524.1 1086.6,524.1 1089.8,521.8C1095.1,516.5 1094.5,507.1 1097.0,507.1C1101.5,511.6 1097.0,527.5 1103.9,535.9C1107.4,535.9 1113.3,532.3 1118.2,532.3C1127.0,538.5 1124.3,544.0 1131.3,555.2C1139.6,568.6 1144.1,581.4 1148.7,581.4C1157.2,571.3 1150.3,551.4 1157.5,524.1C1159.1,517.9 1162.7,519.7 1166.4,514.3C1170.9,507.8 1168.9,503.3 1173.9,500.2C1176.8,500.2 1177.8,504.2 1182.1,504.4C1189.2,504.4 1191.0,504.4 1196.8,501.2C1204.1,496.2 1203.4,486.4 1208.3,486.4C1214.1,487.7 1213.0,496.4 1218.1,506.1C1222.0,513.6 1223.9,520.8 1226.3,520.8C1231.8,512.8 1228.1,501.1 1233.9,483.1C1236.3,475.7 1239.4,470.0 1242.7,470.0C1247.1,471.9 1243.5,483.9 1249.3,489.7C1252.5,489.7 1256.4,489.7 1260.7,488.1C1266.2,484.2 1264.8,475.9 1268.9,475.9C1273.0,475.9 1273.4,488.1 1277.1,488.1C1283.2,485.3 1285.4,478.3 1288.6,466.8C1296.1,439.8 1292.9,438.8 1298.4,411.1C1302.7,389.3 1299.7,385.4 1308.2,367.8C1310.4,366.8 1316.4,367.8 1319.7,366.8C1326.2,359.4 1322.2,355.1 1327.9,345.5C1331.2,339.9 1334.8,336.4 1337.7,336.4C1343.8,342.1 1339.4,360.6 1345.9,362.6C1351.7,362.6 1355.2,344.6 1362.3,343.9C1367.5,343.9 1364.5,354.3 1370.5,360.3C1374.4,363.6 1376.6,361.2 1382.0,363.6C1386.4,365.6 1385.8,368.5 1390.1,369.1C1394.0,369.1 1396.7,369.1 1398.3,365.8C1404.4,352.0 1399.9,338.9 1405.5,334.1C1408.9,334.1 1410.0,343.3 1416.4,350.4C1419.5,353.9 1421.2,352.1 1424.6,355.4C1428.6,359.2 1427.0,361.7 1431.1,364.5C1433.3,364.5 1435.4,364.5 1437.1,364.1C1444.3,354.8 1443.5,342.9 1448.9,341.6C1453.0,341.6 1449.7,353.9 1456.0,359.4C1461.5,362.2 1465.8,359.4 1472.6,362.2C1477.6,365.0 1477.7,366.6 1479.7,372.4C1486.0,391.2 1482.5,392.7 1489.1,411.4C1492.9,422.2 1495.6,431.5 1500.5,431.5C1505.1,431.5 1503.2,420.8 1508.1,411.4C1511.7,404.6 1512.7,399.2 1517.5,399.1C1522.2,399.1 1522.7,410.9 1527.0,410.9C1531.6,410.4 1532.5,404.6 1535.3,397.2C1540.6,383.0 1537.5,375.4 1543.1,367.6C1545.2,367.6 1546.1,373.1 1550.7,375.9C1555.8,379.0 1560.4,379.5 1562.5,379.5C1567.2,367.6 1562.5,354.3 1567.2,344.0C1569.5,344.0 1576.5,351.1 1579.0,351.1C1590.4,329.1 1589.1,290.3 1595.1,290.3C1602.2,293.8 1596.6,330.0 1605.1,364.1C1606.3,367.6 1609.6,366.8 1614.5,367.6C1622.6,368.4 1625.5,367.6 1631.1,368.4C1637.3,373.1 1636.0,376.5 1638.2,385.4C1643.4,406.3 1640.2,420.1 1645.8,428.0C1648.5,428.0 1650.6,409.0 1654.7,409.0C1659.6,410.3 1661.2,432.7 1663.7,432.7C1669.5,421.0 1664.3,384.5 1671.3,375.4C1675.2,375.4 1680.9,389.0 1685.5,404.3C1693.9,432.4 1690.0,448.4 1697.3,462.3C1700.0,462.3 1699.7,446.9 1705.6,442.2C1708.6,442.2 1711.7,448.1 1715.1,448.1C1720.9,444.7 1722.0,431.5 1724.1,431.5C1730.2,445.6 1724.5,465.1 1731.6,485.9C1733.0,485.9 1736.7,481.2 1741.1,481.2C1745.6,481.8 1746.7,488.3 1749.4,488.3C1755.9,482.2 1753.3,475.6 1759.5,464.0C1765.5,452.8 1766.3,445.7 1773.7,442.7C1778.1,442.7 1777.3,450.4 1783.1,454.5C1787.3,456.9 1788.8,454.9 1793.8,456.9C1798.1,458.7 1798.7,462.1 1801.6,462.1C1810.5,455.1 1808.2,444.3 1817.4,438.4C1821.5,438.4 1825.7,445.1 1828.1,445.1C1835.7,432.8 1830.8,424.7 1837.5,406.0C1841.4,395.1 1841.5,392.2 1849.4,385.9C1853.4,385.9 1856.3,385.9 1861.2,387.1C1865.7,389.4 1863.8,393.6 1868.3,395.4C1872.7,395.4 1875.8,395.4 1878.9,394.2C1884.6,387.9 1880.6,380.6 1886.0,376.0C1888.9,376.0 1891.2,380.0 1895.5,380.0C1900.3,379.0 1901.3,372.2 1904.2,372.2C1909.0,375.6 1904.8,385.2 1910.9,390.7C1915.3,391.1 1921.1,390.7 1925.1,391.1C1934.1,401.8 1930.2,406.6 1936.9,421.4C1940.9,430.3 1941.7,438.4 1946.4,438.4C1951.1,438.4 1953.6,421.4 1955.8,421.4C1962.1,436.0 1957.0,457.8 1963.4,477.7C1964.7,477.7 1966.3,471.4 1971.2,469.2C1976.7,468.2 1982.0,469.2 1984.2,468.2C1994.4,443.1 1986.1,431.9 1996.0,408.2C1998.0,408.2 2006.5,411.2 2008.0,411.2C2016.0,383.1 2009.0,375.9 2016.0,342.1C2020.0,322.9 2020.7,320.9 2030.0,305.1C2032.2,303.1 2035.7,305.1 2039.0,303.1C2045.7,297.4 2044.9,295.8 2050.0,288.0C2054.7,280.8 2056.1,273.0 2058.5,273.0C2064.6,283.1 2061.5,310.2 2067.0,316.1C2070.3,316.1 2071.0,294.1 2076.0,291.7C2079.5,291.7 2082.6,299.2 2084.0,308.1C2089.6,343.4 2085.8,344.2 2090.0,380.1C2094.4,417.8 2095.5,448.7 2101.1,455.2C2105.1,455.2 2103.0,427.6 2109.1,402.2C2110.0,398.4 2111.6,398.0 2115.1,396.8C2118.4,396.8 2121.3,396.8 2122.6,397.7C2128.8,412.3 2126.0,415.0 2130.1,432.2C2135.8,456.3 2135.3,456.5 2142.1,480.2C2146.5,495.5 2146.2,508.7 2152.6,510.3C2158.2,510.3 2160.0,498.6 2166.1,486.2C2173.0,472.3 2173.3,457.7 2178.7,457.7C2183.8,457.7 2181.1,473.0 2187.1,486.2C2189.8,492.1 2193.9,495.9 2196.2,495.9C2202.2,487.2 2196.5,477.2 2203.7,462.2C2208.5,452.1 2215.6,456.0 2220.2,445.7C2228.4,427.5 2221.3,413.6 2229.2,405.2C2233.3,405.2 2239.8,410.9 2244.2,420.2C2253.3,439.4 2250.0,441.3 2256.2,462.2C2259.8,474.3 2258.7,484.4 2263.7,486.2C2267.7,486.2 2267.3,475.8 2274.2,468.8C2280.8,462.0 2284.0,458.8 2290.8,458.6C2294.5,458.6 2294.7,463.0 2295.3,468.2C2300.7,511.3 2296.8,512.5 2302.8,555.3C2303.5,560.6 2306.4,564.3 2308.8,564.3C2313.1,561.4 2312.6,546.3 2316.3,546.3C2320.1,546.3 2319.0,562.1 2323.8,564.3C2327.2,564.3 2327.3,557.5 2332.8,553.8C2338.5,550.0 2342.5,553.8 2346.3,549.3C2355.3,536.6 2352.6,520.4 2358.3,517.8C2362.3,517.8 2363.1,528.8 2365.8,540.3C2373.9,574.9 2369.5,576.3 2380.0,610.0C2386.6,631.2 2390.0,630.0 2400.0,650.0C2412.5,675.0 2415.2,673.9 2425.0,700.0C2437.2,732.5 2433.7,733.9 2443.9,767.2C2446.4,775.5 2445.9,776.1 2450.5,783.3C2454.9,790.2 2457.4,795.4 2462.0,795.4C2465.7,795.4 2465.0,789.5 2467.1,783.3C2469.8,775.4 2468.9,775.1 2471.7,767.2C2480.3,743.4 2474.9,736.3 2490.0,720.0C2499.1,715.0 2511.7,715.0 2520.0,715.0C2534.9,730.2 2527.9,741.2 2536.3,767.2C2537.5,771.0 2537.7,774.7 2539.3,774.7C2540.9,774.7 2541.3,771.1 2542.8,767.2C2551.7,743.7 2546.7,740.3 2560.0,720.0C2570.3,704.2 2573.6,704.6 2590.0,695.0C2598.3,691.1 2600.4,691.1 2609.3,691.1C2614.6,691.7 2613.6,697.9 2618.4,698.4C2622.7,698.4 2625.3,693.0 2627.5,693.0C2633.5,700.9 2628.7,708.7 2634.8,720.2C2636.9,723.9 2641.7,720.2 2643.9,723.9C2649.8,734.8 2651.0,750.0 2651.0,750.0" fill="none" stroke="#f8cd5f" stroke-width="2.0" stroke-linejoin="round"/><line x1="183" y1="515.8" x2="2651" y2="515.8" stroke="#e4e8e8" stroke-width="2.2" stroke-dasharray="8 4"/><line x1="2651" y1="204.5" x2="2651" y2="1004" stroke="#b4b6b8" stroke-width="2.2" stroke-dasharray="8 4"/><circle cx="2651" cy="514" r="8.5" fill="#ffffff" stroke="#5ec48c" stroke-width="3.5"/><circle cx="2651" cy="750" r="8.5" fill="#ffffff" stroke="#e6b85c" stroke-width="3.5"/><path d="M188.0,1139.6 L195.2,1139.8 L202.3,1140.3 L205.5,1142.5 L210.9,1142.0 L216.3,1142.1 L221.7,1141.5 L227.1,1141.5 L232.6,1141.2 L238.0,1140.7 L243.4,1140.8 L248.8,1140.2 L254.2,1140.2 L259.6,1140.0 L264.6,1139.7 L269.6,1139.6 L274.6,1139.8 L279.6,1140.1 L284.6,1139.6 L289.6,1139.6 L294.6,1139.9 L299.6,1140.0 L304.6,1139.8 L309.6,1139.6 L314.6,1140.0 L319.6,1139.3 L324.6,1139.8 L329.6,1139.4 L334.6,1139.3 L339.6,1139.2 L344.6,1139.3 L349.6,1139.6 L354.6,1139.1 L359.6,1139.4 L364.6,1139.3 L371.0,1138.0 L376.2,1138.3 L381.4,1138.2 L386.5,1138.5 L391.7,1138.3 L396.9,1138.5 L402.0,1138.8 L407.2,1139.3 L412.4,1139.3 L417.7,1139.1 L423.0,1138.9 L428.3,1138.9 L433.6,1138.7 L438.8,1138.4 L444.1,1138.6 L449.4,1138.4 L454.7,1138.0 L460.0,1138.0 L465.5,1137.6 L470.9,1137.0 L476.4,1136.8 L481.9,1136.2 L487.4,1135.4 L492.8,1135.3 L498.3,1134.5 L503.6,1133.9 L508.9,1133.7 L514.2,1133.6 L519.6,1132.8 L524.9,1132.7 L530.2,1132.3 L536.5,1129.9 L542.9,1128.2 L549.2,1126.0 L558.8,1119.6 L565.2,1122.1 L571.5,1124.7 L577.9,1125.3 L584.2,1124.0 L590.6,1122.1 L597.0,1115.8 L602.5,1114.0 L608.1,1109.4 L612.9,1115.8 L619.3,1112.7 L625.6,1111.6 L632.0,1108.4 L637.3,1110.1 L642.6,1111.5 L647.9,1112.6 L654.3,1108.4 L660.1,1107.5 L666.0,1108.2 L671.8,1106.2 L681.4,1113.8 L687.2,1113.6 L693.1,1110.1 L698.9,1108.4 L705.2,1115.4 L711.6,1121.2 L717.2,1120.4 L722.8,1123.5 L728.3,1124.1 L733.9,1124.4 L740.2,1120.2 L746.6,1124.1 L753.0,1124.4 L758.7,1125.9 L764.4,1124.3 L770.2,1124.9 L775.9,1126.3 L781.6,1126.0 L788.0,1121.1 L794.4,1119.6 L800.8,1117.9 L807.1,1116.4 L812.8,1114.7 L818.5,1114.0 L824.3,1113.3 L830.0,1115.3 L835.7,1113.8 L842.1,1113.9 L848.4,1115.7 L854.8,1118.0 L864.4,1116.4 L870.0,1113.2 L875.5,1112.2 L881.1,1106.6 L886.7,1105.3 L892.3,1104.9 L897.9,1105.0 L903.4,1105.9 L909.0,1104.3 L918.5,1108.4 L924.9,1111.1 L931.2,1112.9 L937.6,1113.2 L942.7,1112.5 L947.8,1113.1 L952.9,1113.1 L958.0,1115.1 L963.1,1113.8 L969.5,1117.2 L975.8,1116.0 L982.2,1119.0 L988.5,1119.4 L994.8,1122.1 L1001.1,1121.4 L1007.5,1121.2 L1015.5,1117.4 L1025.0,1118.0 L1029.8,1121.2 L1039.3,1117.4 L1045.7,1121.2 L1051.5,1120.2 L1057.4,1119.7 L1063.2,1119.0 L1072.8,1115.8 L1079.2,1117.8 L1085.5,1119.6 L1091.2,1119.9 L1096.9,1120.1 L1102.7,1121.0 L1108.4,1121.5 L1114.1,1122.1 L1122.1,1126.6 L1128.1,1126.5 L1134.0,1126.8 L1140.0,1126.3 L1146.0,1126.0 L1152.3,1126.8 L1158.7,1127.5 L1166.7,1133.0 L1172.1,1133.0 L1177.5,1132.9 L1182.9,1132.1 L1188.3,1132.8 L1193.7,1132.3 L1200.1,1132.0 L1206.4,1131.6 L1212.8,1130.7 L1218.4,1131.0 L1223.9,1130.6 L1229.5,1130.6 L1235.1,1130.7 L1240.8,1130.8 L1246.6,1131.8 L1252.3,1131.6 L1258.1,1132.1 L1263.8,1133.0 L1270.2,1132.7 L1276.5,1133.0 L1281.9,1132.6 L1287.3,1132.7 L1292.7,1132.3 L1298.1,1132.2 L1303.5,1132.3 L1309.0,1132.2 L1314.4,1132.4 L1319.8,1132.0 L1325.2,1132.7 L1330.6,1132.3 L1338.6,1134.5 L1343.6,1134.6 L1348.6,1134.1 L1353.6,1134.3 L1358.7,1134.3 L1363.7,1134.4 L1368.7,1134.1 L1373.7,1134.8 L1378.7,1135.0 L1383.7,1134.5 L1388.8,1134.5 L1393.8,1134.1 L1398.8,1134.1 L1403.8,1134.5 L1413.4,1131.7 L1419.0,1131.3 L1424.5,1131.0 L1430.0,1131.3 L1435.6,1130.7 L1442.0,1130.1 L1448.3,1129.6 L1454.7,1129.8 L1460.3,1130.9 L1465.8,1131.1 L1471.4,1131.3 L1477.0,1132.3 L1486.6,1128.5 L1492.3,1128.0 L1498.0,1127.0 L1503.8,1127.0 L1509.5,1127.0 L1515.2,1126.0 L1520.5,1126.9 L1525.8,1127.2 L1531.1,1127.5 L1536.3,1127.4 L1541.5,1127.7 L1546.7,1127.6 L1551.9,1128.4 L1557.1,1128.3 L1562.4,1128.7 L1567.6,1128.3 L1572.8,1128.4 L1578.0,1129.1 L1583.2,1129.4 L1588.4,1129.1 L1594.0,1127.9 L1599.6,1126.0 L1604.8,1126.4 L1609.9,1126.4 L1615.1,1126.4 L1620.3,1125.9 L1625.4,1126.3 L1630.6,1126.2 L1635.8,1125.9 L1640.9,1125.9 L1646.1,1126.2 L1651.3,1126.3 L1656.4,1126.7 L1661.6,1126.6 L1668.0,1129.1 L1673.3,1129.5 L1678.6,1128.9 L1683.9,1129.3 L1689.2,1129.3 L1694.5,1129.2 L1699.8,1128.5 L1705.2,1128.3 L1710.5,1128.2 L1715.8,1128.1 L1721.1,1128.1 L1726.4,1128.4 L1731.7,1128.2 L1738.1,1126.4 L1744.4,1123.7 L1749.4,1124.4 L1754.4,1122.9 L1759.4,1123.1 L1764.4,1123.2 L1769.4,1120.7 L1774.4,1122.0 L1779.4,1121.2 L1785.8,1120.5 L1792.2,1117.4 L1800.0,1118.6 L1805.5,1119.0 L1811.1,1118.6 L1816.6,1117.3 L1822.1,1116.0 L1827.7,1117.5 L1833.2,1116.2 L1839.0,1117.1 L1844.9,1119.9 L1850.7,1120.4 L1855.9,1121.2 L1861.2,1118.9 L1866.4,1118.6 L1871.7,1115.7 L1876.9,1113.4 L1882.2,1114.7 L1887.4,1113.4 L1892.6,1109.2 L1897.8,1103.6 L1903.9,1101.4 L1910.1,1101.1 L1918.8,1104.6 L1925.8,1101.1 L1931.6,1100.3 L1937.5,1100.8 L1943.3,1102.2 L1950.2,1106.4 L1957.2,1106.7 L1964.2,1104.6 L1967.7,1108.1 L1973.0,1107.7 L1978.2,1104.4 L1983.5,1105.2 L1988.7,1102.9 L1993.9,1104.1 L1999.2,1102.8 L2004.4,1101.6 L2009.6,1101.8 L2014.8,1103.3 L2020.1,1103.3 L2025.3,1104.3 L2030.6,1107.1 L2037.6,1109.9 L2044.6,1109.9 L2051.6,1107.7 L2058.6,1104.6 L2064.7,1103.8 L2070.8,1102.9 L2079.5,1111.6 L2084.8,1111.4 L2090.0,1108.5 L2095.2,1108.3 L2100.5,1105.7 L2105.7,1108.6 L2111.0,1108.8 L2116.2,1111.6 L2122.6,1108.9 L2129.0,1107.0 L2135.4,1105.7 L2140.7,1105.3 L2145.9,1106.7 L2151.2,1106.0 L2156.4,1107.1 L2161.7,1104.8 L2166.9,1102.9 L2172.7,1101.4 L2178.5,1103.4 L2184.3,1101.8 L2189.6,1095.3 L2194.8,1089.6 L2200.1,1087.0 L2205.3,1084.7 L2210.6,1085.3 L2215.8,1085.4 L2221.1,1085.0 L2226.3,1082.0 L2231.6,1081.9 L2236.8,1079.1 L2243.8,1082.6 L2250.7,1086.1 L2255.9,1085.0 L2261.2,1083.7 L2268.2,1082.0 L2275.2,1080.2 L2280.4,1079.9 L2285.7,1082.3 L2290.9,1082.6 L2296.2,1084.7 L2301.2,1083.2 L2306.3,1085.6 L2311.3,1083.7 L2316.4,1084.7 L2323.4,1091.4 L2327.5,1088.6 L2329.9,1090.7 L2337.4,1093.9 L2343.6,1091.4 L2346.7,1092.9 L2351.1,1090.4 L2353.5,1090.7 L2355.7,1093.5 L2362.2,1093.5 L2366.9,1097.6 L2371.6,1092.0 L2375.9,1092.9 L2380.9,1092.3 L2384.0,1086.4 L2391.4,1086.1 L2395.2,1084.5 L2397.9,1086.7 L2402.6,1080.2 L2407.0,1081.1 L2411.9,1080.5 L2414.4,1078.3 L2418.8,1075.5 L2421.2,1078.0 L2425.0,1077.4 L2428.1,1080.5 L2433.0,1079.6 L2435.2,1081.7 L2440.2,1076.5 L2444.2,1079.3 L2449.8,1079.9 L2453.9,1081.4 L2457.9,1078.3 L2462.5,1077.7 L2465.3,1079.6 L2468.4,1076.8 L2472.8,1077.7 L2477.1,1071.5 L2480.0,1070.9 L2484.7,1070.5 L2488.5,1072.1 L2491.6,1071.1 L2496.3,1070.5 L2503.3,1075.3 L2506.4,1073.5 L2508.7,1073.2 L2514.2,1070.1 L2516.5,1070.5 L2524.3,1073.6 L2526.6,1072.1 L2530.5,1075.2 L2533.6,1075.6 L2537.5,1077.5 L2541.3,1075.6 L2546.0,1076.1 L2551.4,1072.9 L2556.9,1072.5 L2561.5,1073.5 L2567.0,1077.5 L2577.0,1068.4 L2583.3,1069.4 L2584.8,1076.1 L2587.1,1073.2 L2592.6,1078.7 L2596.5,1077.5 L2603.8,1074.0 L2606.6,1076.4 L2611.2,1076.4 L2613.5,1081.8 L2617.4,1081.4 L2620.5,1079.1 L2625.2,1086.1 L2629.1,1086.8 L2634.1,1092.7 L2639.2,1088.4 L2643.0,1088.5 L2648.5,1087.6 L2650.8,1089.2 L2655.5,1087.5 L2660.2,1090.0 L2660.2,1164.7 L188,1164.7 Z" fill="#0b1020" clip-path="url(#unselclip)"/><rect x="2324" y="1045" width="336.2" height="119.7" fill="#0b0f1f"/><path d="M188.0,1139.6 L195.2,1139.8 L202.3,1140.3 L205.5,1142.5 L210.9,1142.0 L216.3,1142.1 L221.7,1141.5 L227.1,1141.5 L232.6,1141.2 L238.0,1140.7 L243.4,1140.8 L248.8,1140.2 L254.2,1140.2 L259.6,1140.0 L264.6,1139.7 L269.6,1139.6 L274.6,1139.8 L279.6,1140.1 L284.6,1139.6 L289.6,1139.6 L294.6,1139.9 L299.6,1140.0 L304.6,1139.8 L309.6,1139.6 L314.6,1140.0 L319.6,1139.3 L324.6,1139.8 L329.6,1139.4 L334.6,1139.3 L339.6,1139.2 L344.6,1139.3 L349.6,1139.6 L354.6,1139.1 L359.6,1139.4 L364.6,1139.3 L371.0,1138.0 L376.2,1138.3 L381.4,1138.2 L386.5,1138.5 L391.7,1138.3 L396.9,1138.5 L402.0,1138.8 L407.2,1139.3 L412.4,1139.3 L417.7,1139.1 L423.0,1138.9 L428.3,1138.9 L433.6,1138.7 L438.8,1138.4 L444.1,1138.6 L449.4,1138.4 L454.7,1138.0 L460.0,1138.0 L465.5,1137.6 L470.9,1137.0 L476.4,1136.8 L481.9,1136.2 L487.4,1135.4 L492.8,1135.3 L498.3,1134.5 L503.6,1133.9 L508.9,1133.7 L514.2,1133.6 L519.6,1132.8 L524.9,1132.7 L530.2,1132.3 L536.5,1129.9 L542.9,1128.2 L549.2,1126.0 L558.8,1119.6 L565.2,1122.1 L571.5,1124.7 L577.9,1125.3 L584.2,1124.0 L590.6,1122.1 L597.0,1115.8 L602.5,1114.0 L608.1,1109.4 L612.9,1115.8 L619.3,1112.7 L625.6,1111.6 L632.0,1108.4 L637.3,1110.1 L642.6,1111.5 L647.9,1112.6 L654.3,1108.4 L660.1,1107.5 L666.0,1108.2 L671.8,1106.2 L681.4,1113.8 L687.2,1113.6 L693.1,1110.1 L698.9,1108.4 L705.2,1115.4 L711.6,1121.2 L717.2,1120.4 L722.8,1123.5 L728.3,1124.1 L733.9,1124.4 L740.2,1120.2 L746.6,1124.1 L753.0,1124.4 L758.7,1125.9 L764.4,1124.3 L770.2,1124.9 L775.9,1126.3 L781.6,1126.0 L788.0,1121.1 L794.4,1119.6 L800.8,1117.9 L807.1,1116.4 L812.8,1114.7 L818.5,1114.0 L824.3,1113.3 L830.0,1115.3 L835.7,1113.8 L842.1,1113.9 L848.4,1115.7 L854.8,1118.0 L864.4,1116.4 L870.0,1113.2 L875.5,1112.2 L881.1,1106.6 L886.7,1105.3 L892.3,1104.9 L897.9,1105.0 L903.4,1105.9 L909.0,1104.3 L918.5,1108.4 L924.9,1111.1 L931.2,1112.9 L937.6,1113.2 L942.7,1112.5 L947.8,1113.1 L952.9,1113.1 L958.0,1115.1 L963.1,1113.8 L969.5,1117.2 L975.8,1116.0 L982.2,1119.0 L988.5,1119.4 L994.8,1122.1 L1001.1,1121.4 L1007.5,1121.2 L1015.5,1117.4 L1025.0,1118.0 L1029.8,1121.2 L1039.3,1117.4 L1045.7,1121.2 L1051.5,1120.2 L1057.4,1119.7 L1063.2,1119.0 L1072.8,1115.8 L1079.2,1117.8 L1085.5,1119.6 L1091.2,1119.9 L1096.9,1120.1 L1102.7,1121.0 L1108.4,1121.5 L1114.1,1122.1 L1122.1,1126.6 L1128.1,1126.5 L1134.0,1126.8 L1140.0,1126.3 L1146.0,1126.0 L1152.3,1126.8 L1158.7,1127.5 L1166.7,1133.0 L1172.1,1133.0 L1177.5,1132.9 L1182.9,1132.1 L1188.3,1132.8 L1193.7,1132.3 L1200.1,1132.0 L1206.4,1131.6 L1212.8,1130.7 L1218.4,1131.0 L1223.9,1130.6 L1229.5,1130.6 L1235.1,1130.7 L1240.8,1130.8 L1246.6,1131.8 L1252.3,1131.6 L1258.1,1132.1 L1263.8,1133.0 L1270.2,1132.7 L1276.5,1133.0 L1281.9,1132.6 L1287.3,1132.7 L1292.7,1132.3 L1298.1,1132.2 L1303.5,1132.3 L1309.0,1132.2 L1314.4,1132.4 L1319.8,1132.0 L1325.2,1132.7 L1330.6,1132.3 L1338.6,1134.5 L1343.6,1134.6 L1348.6,1134.1 L1353.6,1134.3 L1358.7,1134.3 L1363.7,1134.4 L1368.7,1134.1 L1373.7,1134.8 L1378.7,1135.0 L1383.7,1134.5 L1388.8,1134.5 L1393.8,1134.1 L1398.8,1134.1 L1403.8,1134.5 L1413.4,1131.7 L1419.0,1131.3 L1424.5,1131.0 L1430.0,1131.3 L1435.6,1130.7 L1442.0,1130.1 L1448.3,1129.6 L1454.7,1129.8 L1460.3,1130.9 L1465.8,1131.1 L1471.4,1131.3 L1477.0,1132.3 L1486.6,1128.5 L1492.3,1128.0 L1498.0,1127.0 L1503.8,1127.0 L1509.5,1127.0 L1515.2,1126.0 L1520.5,1126.9 L1525.8,1127.2 L1531.1,1127.5 L1536.3,1127.4 L1541.5,1127.7 L1546.7,1127.6 L1551.9,1128.4 L1557.1,1128.3 L1562.4,1128.7 L1567.6,1128.3 L1572.8,1128.4 L1578.0,1129.1 L1583.2,1129.4 L1588.4,1129.1 L1594.0,1127.9 L1599.6,1126.0 L1604.8,1126.4 L1609.9,1126.4 L1615.1,1126.4 L1620.3,1125.9 L1625.4,1126.3 L1630.6,1126.2 L1635.8,1125.9 L1640.9,1125.9 L1646.1,1126.2 L1651.3,1126.3 L1656.4,1126.7 L1661.6,1126.6 L1668.0,1129.1 L1673.3,1129.5 L1678.6,1128.9 L1683.9,1129.3 L1689.2,1129.3 L1694.5,1129.2 L1699.8,1128.5 L1705.2,1128.3 L1710.5,1128.2 L1715.8,1128.1 L1721.1,1128.1 L1726.4,1128.4 L1731.7,1128.2 L1738.1,1126.4 L1744.4,1123.7 L1749.4,1124.4 L1754.4,1122.9 L1759.4,1123.1 L1764.4,1123.2 L1769.4,1120.7 L1774.4,1122.0 L1779.4,1121.2 L1785.8,1120.5 L1792.2,1117.4 L1800.0,1118.6 L1805.5,1119.0 L1811.1,1118.6 L1816.6,1117.3 L1822.1,1116.0 L1827.7,1117.5 L1833.2,1116.2 L1839.0,1117.1 L1844.9,1119.9 L1850.7,1120.4 L1855.9,1121.2 L1861.2,1118.9 L1866.4,1118.6 L1871.7,1115.7 L1876.9,1113.4 L1882.2,1114.7 L1887.4,1113.4 L1892.6,1109.2 L1897.8,1103.6 L1903.9,1101.4 L1910.1,1101.1 L1918.8,1104.6 L1925.8,1101.1 L1931.6,1100.3 L1937.5,1100.8 L1943.3,1102.2 L1950.2,1106.4 L1957.2,1106.7 L1964.2,1104.6 L1967.7,1108.1 L1973.0,1107.7 L1978.2,1104.4 L1983.5,1105.2 L1988.7,1102.9 L1993.9,1104.1 L1999.2,1102.8 L2004.4,1101.6 L2009.6,1101.8 L2014.8,1103.3 L2020.1,1103.3 L2025.3,1104.3 L2030.6,1107.1 L2037.6,1109.9 L2044.6,1109.9 L2051.6,1107.7 L2058.6,1104.6 L2064.7,1103.8 L2070.8,1102.9 L2079.5,1111.6 L2084.8,1111.4 L2090.0,1108.5 L2095.2,1108.3 L2100.5,1105.7 L2105.7,1108.6 L2111.0,1108.8 L2116.2,1111.6 L2122.6,1108.9 L2129.0,1107.0 L2135.4,1105.7 L2140.7,1105.3 L2145.9,1106.7 L2151.2,1106.0 L2156.4,1107.1 L2161.7,1104.8 L2166.9,1102.9 L2172.7,1101.4 L2178.5,1103.4 L2184.3,1101.8 L2189.6,1095.3 L2194.8,1089.6 L2200.1,1087.0 L2205.3,1084.7 L2210.6,1085.3 L2215.8,1085.4 L2221.1,1085.0 L2226.3,1082.0 L2231.6,1081.9 L2236.8,1079.1 L2243.8,1082.6 L2250.7,1086.1 L2255.9,1085.0 L2261.2,1083.7 L2268.2,1082.0 L2275.2,1080.2 L2280.4,1079.9 L2285.7,1082.3 L2290.9,1082.6 L2296.2,1084.7 L2301.2,1083.2 L2306.3,1085.6 L2311.3,1083.7 L2316.4,1084.7 L2323.4,1091.4 L2327.5,1088.6 L2329.9,1090.7 L2337.4,1093.9 L2343.6,1091.4 L2346.7,1092.9 L2351.1,1090.4 L2353.5,1090.7 L2355.7,1093.5 L2362.2,1093.5 L2366.9,1097.6 L2371.6,1092.0 L2375.9,1092.9 L2380.9,1092.3 L2384.0,1086.4 L2391.4,1086.1 L2395.2,1084.5 L2397.9,1086.7 L2402.6,1080.2 L2407.0,1081.1 L2411.9,1080.5 L2414.4,1078.3 L2418.8,1075.5 L2421.2,1078.0 L2425.0,1077.4 L2428.1,1080.5 L2433.0,1079.6 L2435.2,1081.7 L2440.2,1076.5 L2444.2,1079.3 L2449.8,1079.9 L2453.9,1081.4 L2457.9,1078.3 L2462.5,1077.7 L2465.3,1079.6 L2468.4,1076.8 L2472.8,1077.7 L2477.1,1071.5 L2480.0,1070.9 L2484.7,1070.5 L2488.5,1072.1 L2491.6,1071.1 L2496.3,1070.5 L2503.3,1075.3 L2506.4,1073.5 L2508.7,1073.2 L2514.2,1070.1 L2516.5,1070.5 L2524.3,1073.6 L2526.6,1072.1 L2530.5,1075.2 L2533.6,1075.6 L2537.5,1077.5 L2541.3,1075.6 L2546.0,1076.1 L2551.4,1072.9 L2556.9,1072.5 L2561.5,1073.5 L2567.0,1077.5 L2577.0,1068.4 L2583.3,1069.4 L2584.8,1076.1 L2587.1,1073.2 L2592.6,1078.7 L2596.5,1077.5 L2603.8,1074.0 L2606.6,1076.4 L2611.2,1076.4 L2613.5,1081.8 L2617.4,1081.4 L2620.5,1079.1 L2625.2,1086.1 L2629.1,1086.8 L2634.1,1092.7 L2639.2,1088.4 L2643.0,1088.5 L2648.5,1087.6 L2650.8,1089.2 L2655.5,1087.5 L2660.2,1090.0 L2660.2,1164.7 L188,1164.7 Z" fill="#232a45" clip-path="url(#selclip)"/><path d="M188.0,1139.6 L195.2,1139.8 L202.3,1140.3 L205.5,1142.5 L210.9,1142.0 L216.3,1142.1 L221.7,1141.5 L227.1,1141.5 L232.6,1141.2 L238.0,1140.7 L243.4,1140.8 L248.8,1140.2 L254.2,1140.2 L259.6,1140.0 L264.6,1139.7 L269.6,1139.6 L274.6,1139.8 L279.6,1140.1 L284.6,1139.6 L289.6,1139.6 L294.6,1139.9 L299.6,1140.0 L304.6,1139.8 L309.6,1139.6 L314.6,1140.0 L319.6,1139.3 L324.6,1139.8 L329.6,1139.4 L334.6,1139.3 L339.6,1139.2 L344.6,1139.3 L349.6,1139.6 L354.6,1139.1 L359.6,1139.4 L364.6,1139.3 L371.0,1138.0 L376.2,1138.3 L381.4,1138.2 L386.5,1138.5 L391.7,1138.3 L396.9,1138.5 L402.0,1138.8 L407.2,1139.3 L412.4,1139.3 L417.7,1139.1 L423.0,1138.9 L428.3,1138.9 L433.6,1138.7 L438.8,1138.4 L444.1,1138.6 L449.4,1138.4 L454.7,1138.0 L460.0,1138.0 L465.5,1137.6 L470.9,1137.0 L476.4,1136.8 L481.9,1136.2 L487.4,1135.4 L492.8,1135.3 L498.3,1134.5 L503.6,1133.9 L508.9,1133.7 L514.2,1133.6 L519.6,1132.8 L524.9,1132.7 L530.2,1132.3 L536.5,1129.9 L542.9,1128.2 L549.2,1126.0 L558.8,1119.6 L565.2,1122.1 L571.5,1124.7 L577.9,1125.3 L584.2,1124.0 L590.6,1122.1 L597.0,1115.8 L602.5,1114.0 L608.1,1109.4 L612.9,1115.8 L619.3,1112.7 L625.6,1111.6 L632.0,1108.4 L637.3,1110.1 L642.6,1111.5 L647.9,1112.6 L654.3,1108.4 L660.1,1107.5 L666.0,1108.2 L671.8,1106.2 L681.4,1113.8 L687.2,1113.6 L693.1,1110.1 L698.9,1108.4 L705.2,1115.4 L711.6,1121.2 L717.2,1120.4 L722.8,1123.5 L728.3,1124.1 L733.9,1124.4 L740.2,1120.2 L746.6,1124.1 L753.0,1124.4 L758.7,1125.9 L764.4,1124.3 L770.2,1124.9 L775.9,1126.3 L781.6,1126.0 L788.0,1121.1 L794.4,1119.6 L800.8,1117.9 L807.1,1116.4 L812.8,1114.7 L818.5,1114.0 L824.3,1113.3 L830.0,1115.3 L835.7,1113.8 L842.1,1113.9 L848.4,1115.7 L854.8,1118.0 L864.4,1116.4 L870.0,1113.2 L875.5,1112.2 L881.1,1106.6 L886.7,1105.3 L892.3,1104.9 L897.9,1105.0 L903.4,1105.9 L909.0,1104.3 L918.5,1108.4 L924.9,1111.1 L931.2,1112.9 L937.6,1113.2 L942.7,1112.5 L947.8,1113.1 L952.9,1113.1 L958.0,1115.1 L963.1,1113.8 L969.5,1117.2 L975.8,1116.0 L982.2,1119.0 L988.5,1119.4 L994.8,1122.1 L1001.1,1121.4 L1007.5,1121.2 L1015.5,1117.4 L1025.0,1118.0 L1029.8,1121.2 L1039.3,1117.4 L1045.7,1121.2 L1051.5,1120.2 L1057.4,1119.7 L1063.2,1119.0 L1072.8,1115.8 L1079.2,1117.8 L1085.5,1119.6 L1091.2,1119.9 L1096.9,1120.1 L1102.7,1121.0 L1108.4,1121.5 L1114.1,1122.1 L1122.1,1126.6 L1128.1,1126.5 L1134.0,1126.8 L1140.0,1126.3 L1146.0,1126.0 L1152.3,1126.8 L1158.7,1127.5 L1166.7,1133.0 L1172.1,1133.0 L1177.5,1132.9 L1182.9,1132.1 L1188.3,1132.8 L1193.7,1132.3 L1200.1,1132.0 L1206.4,1131.6 L1212.8,1130.7 L1218.4,1131.0 L1223.9,1130.6 L1229.5,1130.6 L1235.1,1130.7 L1240.8,1130.8 L1246.6,1131.8 L1252.3,1131.6 L1258.1,1132.1 L1263.8,1133.0 L1270.2,1132.7 L1276.5,1133.0 L1281.9,1132.6 L1287.3,1132.7 L1292.7,1132.3 L1298.1,1132.2 L1303.5,1132.3 L1309.0,1132.2 L1314.4,1132.4 L1319.8,1132.0 L1325.2,1132.7 L1330.6,1132.3 L1338.6,1134.5 L1343.6,1134.6 L1348.6,1134.1 L1353.6,1134.3 L1358.7,1134.3 L1363.7,1134.4 L1368.7,1134.1 L1373.7,1134.8 L1378.7,1135.0 L1383.7,1134.5 L1388.8,1134.5 L1393.8,1134.1 L1398.8,1134.1 L1403.8,1134.5 L1413.4,1131.7 L1419.0,1131.3 L1424.5,1131.0 L1430.0,1131.3 L1435.6,1130.7 L1442.0,1130.1 L1448.3,1129.6 L1454.7,1129.8 L1460.3,1130.9 L1465.8,1131.1 L1471.4,1131.3 L1477.0,1132.3 L1486.6,1128.5 L1492.3,1128.0 L1498.0,1127.0 L1503.8,1127.0 L1509.5,1127.0 L1515.2,1126.0 L1520.5,1126.9 L1525.8,1127.2 L1531.1,1127.5 L1536.3,1127.4 L1541.5,1127.7 L1546.7,1127.6 L1551.9,1128.4 L1557.1,1128.3 L1562.4,1128.7 L1567.6,1128.3 L1572.8,1128.4 L1578.0,1129.1 L1583.2,1129.4 L1588.4,1129.1 L1594.0,1127.9 L1599.6,1126.0 L1604.8,1126.4 L1609.9,1126.4 L1615.1,1126.4 L1620.3,1125.9 L1625.4,1126.3 L1630.6,1126.2 L1635.8,1125.9 L1640.9,1125.9 L1646.1,1126.2 L1651.3,1126.3 L1656.4,1126.7 L1661.6,1126.6 L1668.0,1129.1 L1673.3,1129.5 L1678.6,1128.9 L1683.9,1129.3 L1689.2,1129.3 L1694.5,1129.2 L1699.8,1128.5 L1705.2,1128.3 L1710.5,1128.2 L1715.8,1128.1 L1721.1,1128.1 L1726.4,1128.4 L1731.7,1128.2 L1738.1,1126.4 L1744.4,1123.7 L1749.4,1124.4 L1754.4,1122.9 L1759.4,1123.1 L1764.4,1123.2 L1769.4,1120.7 L1774.4,1122.0 L1779.4,1121.2 L1785.8,1120.5 L1792.2,1117.4 L1800.0,1118.6 L1805.5,1119.0 L1811.1,1118.6 L1816.6,1117.3 L1822.1,1116.0 L1827.7,1117.5 L1833.2,1116.2 L1839.0,1117.1 L1844.9,1119.9 L1850.7,1120.4 L1855.9,1121.2 L1861.2,1118.9 L1866.4,1118.6 L1871.7,1115.7 L1876.9,1113.4 L1882.2,1114.7 L1887.4,1113.4 L1892.6,1109.2 L1897.8,1103.6 L1903.9,1101.4 L1910.1,1101.1 L1918.8,1104.6 L1925.8,1101.1 L1931.6,1100.3 L1937.5,1100.8 L1943.3,1102.2 L1950.2,1106.4 L1957.2,1106.7 L1964.2,1104.6 L1967.7,1108.1 L1973.0,1107.7 L1978.2,1104.4 L1983.5,1105.2 L1988.7,1102.9 L1993.9,1104.1 L1999.2,1102.8 L2004.4,1101.6 L2009.6,1101.8 L2014.8,1103.3 L2020.1,1103.3 L2025.3,1104.3 L2030.6,1107.1 L2037.6,1109.9 L2044.6,1109.9 L2051.6,1107.7 L2058.6,1104.6 L2064.7,1103.8 L2070.8,1102.9 L2079.5,1111.6 L2084.8,1111.4 L2090.0,1108.5 L2095.2,1108.3 L2100.5,1105.7 L2105.7,1108.6 L2111.0,1108.8 L2116.2,1111.6 L2122.6,1108.9 L2129.0,1107.0 L2135.4,1105.7 L2140.7,1105.3 L2145.9,1106.7 L2151.2,1106.0 L2156.4,1107.1 L2161.7,1104.8 L2166.9,1102.9 L2172.7,1101.4 L2178.5,1103.4 L2184.3,1101.8 L2189.6,1095.3 L2194.8,1089.6 L2200.1,1087.0 L2205.3,1084.7 L2210.6,1085.3 L2215.8,1085.4 L2221.1,1085.0 L2226.3,1082.0 L2231.6,1081.9 L2236.8,1079.1 L2243.8,1082.6 L2250.7,1086.1 L2255.9,1085.0 L2261.2,1083.7 L2268.2,1082.0 L2275.2,1080.2 L2280.4,1079.9 L2285.7,1082.3 L2290.9,1082.6 L2296.2,1084.7 L2301.2,1083.2 L2306.3,1085.6 L2311.3,1083.7 L2316.4,1084.7 L2323.4,1091.4 L2327.5,1088.6 L2329.9,1090.7 L2337.4,1093.9 L2343.6,1091.4 L2346.7,1092.9 L2351.1,1090.4 L2353.5,1090.7 L2355.7,1093.5 L2362.2,1093.5 L2366.9,1097.6 L2371.6,1092.0 L2375.9,1092.9 L2380.9,1092.3 L2384.0,1086.4 L2391.4,1086.1 L2395.2,1084.5 L2397.9,1086.7 L2402.6,1080.2 L2407.0,1081.1 L2411.9,1080.5 L2414.4,1078.3 L2418.8,1075.5 L2421.2,1078.0 L2425.0,1077.4 L2428.1,1080.5 L2433.0,1079.6 L2435.2,1081.7 L2440.2,1076.5 L2444.2,1079.3 L2449.8,1079.9 L2453.9,1081.4 L2457.9,1078.3 L2462.5,1077.7 L2465.3,1079.6 L2468.4,1076.8 L2472.8,1077.7 L2477.1,1071.5 L2480.0,1070.9 L2484.7,1070.5 L2488.5,1072.1 L2491.6,1071.1 L2496.3,1070.5 L2503.3,1075.3 L2506.4,1073.5 L2508.7,1073.2 L2514.2,1070.1 L2516.5,1070.5 L2524.3,1073.6 L2526.6,1072.1 L2530.5,1075.2 L2533.6,1075.6 L2537.5,1077.5 L2541.3,1075.6 L2546.0,1076.1 L2551.4,1072.9 L2556.9,1072.5 L2561.5,1073.5 L2567.0,1077.5 L2577.0,1068.4 L2583.3,1069.4 L2584.8,1076.1 L2587.1,1073.2 L2592.6,1078.7 L2596.5,1077.5 L2603.8,1074.0 L2606.6,1076.4 L2611.2,1076.4 L2613.5,1081.8 L2617.4,1081.4 L2620.5,1079.1 L2625.2,1086.1 L2629.1,1086.8 L2634.1,1092.7 L2639.2,1088.4 L2643.0,1088.5 L2648.5,1087.6 L2650.8,1089.2 L2655.5,1087.5 L2660.2,1090.0" fill="none" stroke="#3b5cc4" stroke-width="1.5" clip-path="url(#unselclip)"/><path d="M188.0,1139.6 L195.2,1139.8 L202.3,1140.3 L205.5,1142.5 L210.9,1142.0 L216.3,1142.1 L221.7,1141.5 L227.1,1141.5 L232.6,1141.2 L238.0,1140.7 L243.4,1140.8 L248.8,1140.2 L254.2,1140.2 L259.6,1140.0 L264.6,1139.7 L269.6,1139.6 L274.6,1139.8 L279.6,1140.1 L284.6,1139.6 L289.6,1139.6 L294.6,1139.9 L299.6,1140.0 L304.6,1139.8 L309.6,1139.6 L314.6,1140.0 L319.6,1139.3 L324.6,1139.8 L329.6,1139.4 L334.6,1139.3 L339.6,1139.2 L344.6,1139.3 L349.6,1139.6 L354.6,1139.1 L359.6,1139.4 L364.6,1139.3 L371.0,1138.0 L376.2,1138.3 L381.4,1138.2 L386.5,1138.5 L391.7,1138.3 L396.9,1138.5 L402.0,1138.8 L407.2,1139.3 L412.4,1139.3 L417.7,1139.1 L423.0,1138.9 L428.3,1138.9 L433.6,1138.7 L438.8,1138.4 L444.1,1138.6 L449.4,1138.4 L454.7,1138.0 L460.0,1138.0 L465.5,1137.6 L470.9,1137.0 L476.4,1136.8 L481.9,1136.2 L487.4,1135.4 L492.8,1135.3 L498.3,1134.5 L503.6,1133.9 L508.9,1133.7 L514.2,1133.6 L519.6,1132.8 L524.9,1132.7 L530.2,1132.3 L536.5,1129.9 L542.9,1128.2 L549.2,1126.0 L558.8,1119.6 L565.2,1122.1 L571.5,1124.7 L577.9,1125.3 L584.2,1124.0 L590.6,1122.1 L597.0,1115.8 L602.5,1114.0 L608.1,1109.4 L612.9,1115.8 L619.3,1112.7 L625.6,1111.6 L632.0,1108.4 L637.3,1110.1 L642.6,1111.5 L647.9,1112.6 L654.3,1108.4 L660.1,1107.5 L666.0,1108.2 L671.8,1106.2 L681.4,1113.8 L687.2,1113.6 L693.1,1110.1 L698.9,1108.4 L705.2,1115.4 L711.6,1121.2 L717.2,1120.4 L722.8,1123.5 L728.3,1124.1 L733.9,1124.4 L740.2,1120.2 L746.6,1124.1 L753.0,1124.4 L758.7,1125.9 L764.4,1124.3 L770.2,1124.9 L775.9,1126.3 L781.6,1126.0 L788.0,1121.1 L794.4,1119.6 L800.8,1117.9 L807.1,1116.4 L812.8,1114.7 L818.5,1114.0 L824.3,1113.3 L830.0,1115.3 L835.7,1113.8 L842.1,1113.9 L848.4,1115.7 L854.8,1118.0 L864.4,1116.4 L870.0,1113.2 L875.5,1112.2 L881.1,1106.6 L886.7,1105.3 L892.3,1104.9 L897.9,1105.0 L903.4,1105.9 L909.0,1104.3 L918.5,1108.4 L924.9,1111.1 L931.2,1112.9 L937.6,1113.2 L942.7,1112.5 L947.8,1113.1 L952.9,1113.1 L958.0,1115.1 L963.1,1113.8 L969.5,1117.2 L975.8,1116.0 L982.2,1119.0 L988.5,1119.4 L994.8,1122.1 L1001.1,1121.4 L1007.5,1121.2 L1015.5,1117.4 L1025.0,1118.0 L1029.8,1121.2 L1039.3,1117.4 L1045.7,1121.2 L1051.5,1120.2 L1057.4,1119.7 L1063.2,1119.0 L1072.8,1115.8 L1079.2,1117.8 L1085.5,1119.6 L1091.2,1119.9 L1096.9,1120.1 L1102.7,1121.0 L1108.4,1121.5 L1114.1,1122.1 L1122.1,1126.6 L1128.1,1126.5 L1134.0,1126.8 L1140.0,1126.3 L1146.0,1126.0 L1152.3,1126.8 L1158.7,1127.5 L1166.7,1133.0 L1172.1,1133.0 L1177.5,1132.9 L1182.9,1132.1 L1188.3,1132.8 L1193.7,1132.3 L1200.1,1132.0 L1206.4,1131.6 L1212.8,1130.7 L1218.4,1131.0 L1223.9,1130.6 L1229.5,1130.6 L1235.1,1130.7 L1240.8,1130.8 L1246.6,1131.8 L1252.3,1131.6 L1258.1,1132.1 L1263.8,1133.0 L1270.2,1132.7 L1276.5,1133.0 L1281.9,1132.6 L1287.3,1132.7 L1292.7,1132.3 L1298.1,1132.2 L1303.5,1132.3 L1309.0,1132.2 L1314.4,1132.4 L1319.8,1132.0 L1325.2,1132.7 L1330.6,1132.3 L1338.6,1134.5 L1343.6,1134.6 L1348.6,1134.1 L1353.6,1134.3 L1358.7,1134.3 L1363.7,1134.4 L1368.7,1134.1 L1373.7,1134.8 L1378.7,1135.0 L1383.7,1134.5 L1388.8,1134.5 L1393.8,1134.1 L1398.8,1134.1 L1403.8,1134.5 L1413.4,1131.7 L1419.0,1131.3 L1424.5,1131.0 L1430.0,1131.3 L1435.6,1130.7 L1442.0,1130.1 L1448.3,1129.6 L1454.7,1129.8 L1460.3,1130.9 L1465.8,1131.1 L1471.4,1131.3 L1477.0,1132.3 L1486.6,1128.5 L1492.3,1128.0 L1498.0,1127.0 L1503.8,1127.0 L1509.5,1127.0 L1515.2,1126.0 L1520.5,1126.9 L1525.8,1127.2 L1531.1,1127.5 L1536.3,1127.4 L1541.5,1127.7 L1546.7,1127.6 L1551.9,1128.4 L1557.1,1128.3 L1562.4,1128.7 L1567.6,1128.3 L1572.8,1128.4 L1578.0,1129.1 L1583.2,1129.4 L1588.4,1129.1 L1594.0,1127.9 L1599.6,1126.0 L1604.8,1126.4 L1609.9,1126.4 L1615.1,1126.4 L1620.3,1125.9 L1625.4,1126.3 L1630.6,1126.2 L1635.8,1125.9 L1640.9,1125.9 L1646.1,1126.2 L1651.3,1126.3 L1656.4,1126.7 L1661.6,1126.6 L1668.0,1129.1 L1673.3,1129.5 L1678.6,1128.9 L1683.9,1129.3 L1689.2,1129.3 L1694.5,1129.2 L1699.8,1128.5 L1705.2,1128.3 L1710.5,1128.2 L1715.8,1128.1 L1721.1,1128.1 L1726.4,1128.4 L1731.7,1128.2 L1738.1,1126.4 L1744.4,1123.7 L1749.4,1124.4 L1754.4,1122.9 L1759.4,1123.1 L1764.4,1123.2 L1769.4,1120.7 L1774.4,1122.0 L1779.4,1121.2 L1785.8,1120.5 L1792.2,1117.4 L1800.0,1118.6 L1805.5,1119.0 L1811.1,1118.6 L1816.6,1117.3 L1822.1,1116.0 L1827.7,1117.5 L1833.2,1116.2 L1839.0,1117.1 L1844.9,1119.9 L1850.7,1120.4 L1855.9,1121.2 L1861.2,1118.9 L1866.4,1118.6 L1871.7,1115.7 L1876.9,1113.4 L1882.2,1114.7 L1887.4,1113.4 L1892.6,1109.2 L1897.8,1103.6 L1903.9,1101.4 L1910.1,1101.1 L1918.8,1104.6 L1925.8,1101.1 L1931.6,1100.3 L1937.5,1100.8 L1943.3,1102.2 L1950.2,1106.4 L1957.2,1106.7 L1964.2,1104.6 L1967.7,1108.1 L1973.0,1107.7 L1978.2,1104.4 L1983.5,1105.2 L1988.7,1102.9 L1993.9,1104.1 L1999.2,1102.8 L2004.4,1101.6 L2009.6,1101.8 L2014.8,1103.3 L2020.1,1103.3 L2025.3,1104.3 L2030.6,1107.1 L2037.6,1109.9 L2044.6,1109.9 L2051.6,1107.7 L2058.6,1104.6 L2064.7,1103.8 L2070.8,1102.9 L2079.5,1111.6 L2084.8,1111.4 L2090.0,1108.5 L2095.2,1108.3 L2100.5,1105.7 L2105.7,1108.6 L2111.0,1108.8 L2116.2,1111.6 L2122.6,1108.9 L2129.0,1107.0 L2135.4,1105.7 L2140.7,1105.3 L2145.9,1106.7 L2151.2,1106.0 L2156.4,1107.1 L2161.7,1104.8 L2166.9,1102.9 L2172.7,1101.4 L2178.5,1103.4 L2184.3,1101.8 L2189.6,1095.3 L2194.8,1089.6 L2200.1,1087.0 L2205.3,1084.7 L2210.6,1085.3 L2215.8,1085.4 L2221.1,1085.0 L2226.3,1082.0 L2231.6,1081.9 L2236.8,1079.1 L2243.8,1082.6 L2250.7,1086.1 L2255.9,1085.0 L2261.2,1083.7 L2268.2,1082.0 L2275.2,1080.2 L2280.4,1079.9 L2285.7,1082.3 L2290.9,1082.6 L2296.2,1084.7 L2301.2,1083.2 L2306.3,1085.6 L2311.3,1083.7 L2316.4,1084.7 L2323.4,1091.4 L2327.5,1088.6 L2329.9,1090.7 L2337.4,1093.9 L2343.6,1091.4 L2346.7,1092.9 L2351.1,1090.4 L2353.5,1090.7 L2355.7,1093.5 L2362.2,1093.5 L2366.9,1097.6 L2371.6,1092.0 L2375.9,1092.9 L2380.9,1092.3 L2384.0,1086.4 L2391.4,1086.1 L2395.2,1084.5 L2397.9,1086.7 L2402.6,1080.2 L2407.0,1081.1 L2411.9,1080.5 L2414.4,1078.3 L2418.8,1075.5 L2421.2,1078.0 L2425.0,1077.4 L2428.1,1080.5 L2433.0,1079.6 L2435.2,1081.7 L2440.2,1076.5 L2444.2,1079.3 L2449.8,1079.9 L2453.9,1081.4 L2457.9,1078.3 L2462.5,1077.7 L2465.3,1079.6 L2468.4,1076.8 L2472.8,1077.7 L2477.1,1071.5 L2480.0,1070.9 L2484.7,1070.5 L2488.5,1072.1 L2491.6,1071.1 L2496.3,1070.5 L2503.3,1075.3 L2506.4,1073.5 L2508.7,1073.2 L2514.2,1070.1 L2516.5,1070.5 L2524.3,1073.6 L2526.6,1072.1 L2530.5,1075.2 L2533.6,1075.6 L2537.5,1077.5 L2541.3,1075.6 L2546.0,1076.1 L2551.4,1072.9 L2556.9,1072.5 L2561.5,1073.5 L2567.0,1077.5 L2577.0,1068.4 L2583.3,1069.4 L2584.8,1076.1 L2587.1,1073.2 L2592.6,1078.7 L2596.5,1077.5 L2603.8,1074.0 L2606.6,1076.4 L2611.2,1076.4 L2613.5,1081.8 L2617.4,1081.4 L2620.5,1079.1 L2625.2,1086.1 L2629.1,1086.8 L2634.1,1092.7 L2639.2,1088.4 L2643.0,1088.5 L2648.5,1087.6 L2650.8,1089.2 L2655.5,1087.5 L2660.2,1090.0" fill="none" stroke="#93a7ec" stroke-width="1.4" clip-path="url(#selclip)"/><rect x="2311.5" y="1091.4" width="28.5" height="33" rx="9" fill="#3a3d49"/><rect x="2321.0" y="1101" width="3" height="14" fill="#b4b6bd"/><rect x="2327.5" y="1101" width="3" height="14" fill="#b4b6bd"/><rect x="2643.6" y="1091.4" width="28.5" height="33" rx="9" fill="#3a3d49"/><rect x="2653.1" y="1101" width="3" height="14" fill="#b4b6bd"/><rect x="2659.6" y="1101" width="3" height="14" fill="#b4b6bd"/></svg>
<div style="position:absolute;left:1249.3px;top:140px;width:20.2px;height:20px;background:#e3bb62"></div>
<div style="position:absolute;left:1408.4px;top:140px;width:20.5px;height:20px;background:#5ec48c"></div>
<div style="position:absolute;left:75.7px;top:492.8px;width:100.8px;height:44.2px;background:#000;border-radius:6px"></div>
<div style="position:absolute;left:2661.8px;top:492.8px;width:160px;height:44px;background:#000;border-radius:6px"></div>
<div style="position:absolute;left:2536.8px;top:1010.9px;width:228.7px;height:43.6px;background:#000;border-radius:6px"></div>
<div style="position:absolute;left:2184.3px;top:557px;width:424.7px;height:209.5px;background:#03050a;border-radius:19px;box-shadow:0 0 6px rgba(0,0,0,0.35)"></div>
<div style="position:absolute;left:2214px;top:662.4px;width:20px;height:20px;border-radius:50%;background:#e6b85c;border:4px solid #e3e6ec"></div>
<div style="position:absolute;left:2214px;top:706.7px;width:20px;height:20px;border-radius:50%;background:#5ec48c;border:4px solid #e3e6ec"></div>
<div class="t" style="left:23.59px;top:37.05px;font-size:42.3px;font-weight:bold;color:#f1f3f6;transform:scaleX(0.9145);transform-origin:0 0;-webkit-text-stroke:1.1px #f1f3f6;">Bitcoin Futures Open Interest (USD)</div>
<div class="t" style="left:1278.57px;top:137.25px;font-size:23.0px;font-weight:normal;color:#f4f4f4;transform:scaleX(0.9972);transform-origin:0 0;-webkit-text-stroke:0.3px #f4f4f4;">BTC Price</div>
<div class="t" style="left:1438.06px;top:137.25px;font-size:23.0px;font-weight:normal;color:#f4f4f4;transform:scaleX(1.0761);transform-origin:0 0;-webkit-text-stroke:0.3px #f4f4f4;">Open Interest</div>
<div class="t" style="left:66.62px;top:192.00px;font-size:24.0px;font-weight:normal;color:#afb1b4;transform:scaleX(0.9750);transform-origin:0 0;-webkit-text-stroke:0.35px #afb1b4;">$100.00B</div>
<div class="t" style="left:79.72px;top:352.00px;font-size:24.0px;font-weight:normal;color:#afb1b4;transform:scaleX(0.9750);transform-origin:0 0;-webkit-text-stroke:0.35px #afb1b4;">$80.00B</div>
<div class="t" style="left:79.72px;top:672.00px;font-size:24.0px;font-weight:normal;color:#afb1b4;transform:scaleX(0.9750);transform-origin:0 0;-webkit-text-stroke:0.35px #afb1b4;">$40.00B</div>
<div class="t" style="left:79.72px;top:832.00px;font-size:24.0px;font-weight:normal;color:#afb1b4;transform:scaleX(0.9750);transform-origin:0 0;-webkit-text-stroke:0.35px #afb1b4;">$20.00B</div>
<div class="t" style="left:140.56px;top:990.00px;font-size:24.0px;font-weight:normal;color:#afb1b4;transform:scaleX(0.9750);transform-origin:0 0;-webkit-text-stroke:0.35px #afb1b4;">$0</div>
<div class="t" style="left:2672.17px;top:192.00px;font-size:24.0px;font-weight:normal;color:#afb1b4;transform:scaleX(0.9670);transform-origin:0 0;-webkit-text-stroke:0.35px #afb1b4;">$130.00K</div>
<div class="t" style="left:2672.17px;top:322.10px;font-size:24.0px;font-weight:normal;color:#afb1b4;transform:scaleX(0.9670);transform-origin:0 0;-webkit-text-stroke:0.35px #afb1b4;">$120.00K</div>
<div class="t" style="left:2672.17px;top:452.20px;font-size:24.0px;font-weight:normal;color:#afb1b4;transform:scaleX(0.9670);transform-origin:0 0;-webkit-text-stroke:0.35px #afb1b4;">$110.00K</div>
<div class="t" style="left:2672.17px;top:582.30px;font-size:24.0px;font-weight:normal;color:#afb1b4;transform:scaleX(0.9670);transform-origin:0 0;-webkit-text-stroke:0.35px #afb1b4;">$100.00K</div>
<div class="t" style="left:2672.17px;top:712.40px;font-size:24.0px;font-weight:normal;color:#afb1b4;transform:scaleX(0.9670);transform-origin:0 0;-webkit-text-stroke:0.35px #afb1b4;">$90.00K</div>
<div class="t" style="left:2672.17px;top:842.50px;font-size:24.0px;font-weight:normal;color:#afb1b4;transform:scaleX(0.9670);transform-origin:0 0;-webkit-text-stroke:0.35px #afb1b4;">$80.00K</div>
<div class="t" style="left:2672.17px;top:972.60px;font-size:24.0px;font-weight:normal;color:#afb1b4;transform:scaleX(0.9670);transform-origin:0 0;-webkit-text-stroke:0.35px #afb1b4;">$70.00K</div>
<div class="t" style="left:165.64px;top:1018.38px;font-size:24.5px;font-weight:normal;color:#afb1b4;transform:scaleX(0.9650);transform-origin:0 0;-webkit-text-stroke:0.35px #afb1b4;">4 Mar</div>
<div class="t" style="left:261.31px;top:1018.38px;font-size:24.5px;font-weight:normal;color:#afb1b4;transform:scaleX(0.9650);transform-origin:0 0;-webkit-text-stroke:0.35px #afb1b4;">16 Mar</div>
<div class="t" style="left:364.66px;top:1018.38px;font-size:24.5px;font-weight:normal;color:#afb1b4;transform:scaleX(0.9650);transform-origin:0 0;-webkit-text-stroke:0.35px #afb1b4;">28 Mar</div>
<div class="t" style="left:476.88px;top:1018.38px;font-size:24.5px;font-weight:normal;color:#afb1b4;transform:scaleX(0.9650);transform-origin:0 0;-webkit-text-stroke:0.35px #afb1b4;">9 Apr</div>
<div class="t" style="left:573.38px;top:1018.38px;font-size:24.5px;font-weight:normal;color:#afb1b4;transform:scaleX(0.9650);transform-origin:0 0;-webkit-text-stroke:0.35px #afb1b4;">21 Apr</div>
<div class="t" style="left:678.27px;top:1018.38px;font-size:24.5px;font-weight:normal;color:#afb1b4;transform:scaleX(0.9650);transform-origin:0 0;-webkit-text-stroke:0.35px #afb1b4;">3 May</div>
<div class="t" style="left:774.18px;top:1018.38px;font-size:24.5px;font-weight:normal;color:#afb1b4;transform:scaleX(0.9650);transform-origin:0 0;-webkit-text-stroke:0.35px #afb1b4;">15 May</div>
<div class="t" style="left:877.54px;top:1018.38px;font-size:24.5px;font-weight:normal;color:#afb1b4;transform:scaleX(0.9650);transform-origin:0 0;-webkit-text-stroke:0.35px #afb1b4;">27 May</div>
<div class="t" style="left:991.29px;top:1018.38px;font-size:24.5px;font-weight:normal;color:#afb1b4;transform:scaleX(0.9650);transform-origin:0 0;-webkit-text-stroke:0.35px #afb1b4;">8 Jun</div>
<div class="t" style="left:1087.55px;top:1018.38px;font-size:24.5px;font-weight:normal;color:#afb1b4;transform:scaleX(0.9650);transform-origin:0 0;-webkit-text-stroke:0.35px #afb1b4;">20 Jun</div>
<div class="t" style="left:1201.08px;top:1018.38px;font-size:24.5px;font-weight:normal;color:#afb1b4;transform:scaleX(0.9650);transform-origin:0 0;-webkit-text-stroke:0.35px #afb1b4;">2 Jul</div>
<div class="t" style="left:1297.22px;top:1018.38px;font-size:24.5px;font-weight:normal;color:#afb1b4;transform:scaleX(0.9650);transform-origin:0 0;-webkit-text-stroke:0.35px #afb1b4;">14 Jul</div>
<div class="t" style="left:1400.57px;top:1018.38px;font-size:24.5px;font-weight:normal;color:#afb1b4;transform:scaleX(0.9650);transform-origin:0 0;-webkit-text-stroke:0.35px #afb1b4;">26 Jul</div>
<div class="t" style="left:1504.87px;top:1018.38px;font-size:24.5px;font-weight:normal;color:#afb1b4;transform:scaleX(0.9650);transform-origin:0 0;-webkit-text-stroke:0.35px #afb1b4;">7 Aug</div>
<div class="t" style="left:1600.90px;top:1018.38px;font-size:24.5px;font-weight:normal;color:#afb1b4;transform:scaleX(0.9650);transform-origin:0 0;-webkit-text-stroke:0.35px #afb1b4;">19 Aug</div>
<div class="t" style="left:1704.37px;top:1018.38px;font-size:24.5px;font-weight:normal;color:#afb1b4;transform:scaleX(0.9650);transform-origin:0 0;-webkit-text-stroke:0.35px #afb1b4;">31 Aug</div>
<div class="t" style="left:1805.95px;top:1018.38px;font-size:24.5px;font-weight:normal;color:#afb1b4;transform:scaleX(0.9650);transform-origin:0 0;-webkit-text-stroke:0.35px #afb1b4;">12 Sep</div>
<div class="t" style="left:1909.31px;top:1018.38px;font-size:24.5px;font-weight:normal;color:#afb1b4;transform:scaleX(0.9650);transform-origin:0 0;-webkit-text-stroke:0.35px #afb1b4;">24 Sep</div>
<div class="t" style="left:2021.17px;top:1018.38px;font-size:24.5px;font-weight:normal;color:#afb1b4;transform:scaleX(0.9650);transform-origin:0 0;-webkit-text-stroke:0.35px #afb1b4;">6 Oct</div>
<div class="t" style="left:2117.20px;top:1018.38px;font-size:24.5px;font-weight:normal;color:#afb1b4;transform:scaleX(0.9650);transform-origin:0 0;-webkit-text-stroke:0.35px #afb1b4;">18 Oct</div>
<div class="t" style="left:2220.67px;top:1018.38px;font-size:24.5px;font-weight:normal;color:#afb1b4;transform:scaleX(0.9650);transform-origin:0 0;-webkit-text-stroke:0.35px #afb1b4;">30 Oct</div>
<div class="t" style="left:2321.43px;top:1018.38px;font-size:24.5px;font-weight:normal;color:#afb1b4;transform:scaleX(0.9650);transform-origin:0 0;-webkit-text-stroke:0.35px #afb1b4;">11 Nov</div>
<div class="t" style="left:2423.95px;top:1018.38px;font-size:24.5px;font-weight:normal;color:#afb1b4;transform:scaleX(0.9650);transform-origin:0 0;-webkit-text-stroke:0.35px #afb1b4;">23 Nov</div>
<div class="t" style="left:89.35px;top:501.29px;font-size:24.6px;font-weight:normal;color:#ffffff;transform:scaleX(0.9375);transform-origin:0 0;">61.23B</div>
<div class="t" style="left:2676.15px;top:500.89px;font-size:24.6px;font-weight:normal;color:#ffffff;transform:scaleX(0.9400);transform-origin:0 0;">106,206.73</div>
<div class="t" style="left:2551.17px;top:1018.05px;font-size:25.0px;font-weight:normal;color:#ffffff;transform:scaleX(0.9157);transform-origin:0 0;">15 Dec 2025, 03:00</div>
<div class="t" style="left:2214.00px;top:593.84px;font-size:29.6px;font-weight:normal;color:#fdfdfd;transform:scaleX(0.9700);transform-origin:0 0;-webkit-text-stroke:0.7px #fdfdfd;">15 Dec 2025, 03:00</div>
<div class="t" style="left:2241.53px;top:657.04px;font-size:29.6px;font-weight:normal;color:#d6dae1;transform:scaleX(0.9586);transform-origin:0 0;">BTC Price</div>
<div class="t" style="left:2441.41px;top:657.04px;font-size:29.6px;font-weight:normal;color:#fdfdfd;transform:scaleX(0.9818);transform-origin:0 0;-webkit-text-stroke:0.7px #fdfdfd;">$88175.00</div>
<div class="t" style="left:2242.26px;top:701.95px;font-size:29.0px;font-weight:normal;color:#d6dae1;transform:scaleX(1.0615);transform-origin:0 0;">Open Interest</div>
<div class="t" style="left:2471.01px;top:701.95px;font-size:29.0px;font-weight:normal;color:#fdfdfd;transform:scaleX(1.0024);transform-origin:0 0;-webkit-text-stroke:0.7px #fdfdfd;">$61.35B</div>
<div class="t" style="left:2509.34px;top:934.40px;font-size:36.0px;font-weight:bold;color:#a7a9ac;transform:scaleX(0.8769);transform-origin:0 0;">coinglass</div>
<svg style="position:absolute;left:2450px;top:925px" width="56" height="60" viewBox="0 0 56 60"><path fill="#a7a9ac" d="M14,10 L13,3 L19,7 Q27,5 35,7 L40,3 L40,10 Q48,11 50,17 L50,19 Q45,20 43,19 Q44,28 41,33 Q36,37 30,37 L40,40 Q44,44 42,49 L38,52 L37,55 L31,55 L29,50 L27,55 L20,55 L18,50 Q11,48 12,42 Q14,38 19,37 Q11,35 10,28 Q9,22 10,19 Q6,20 4,19 Q4,12 14,10 Z M16,53 L9,57 L16,54Z"/></svg>
<div style="position:absolute;left:2742.3px;top:1122.9px;width:60px;height:63.7px;background:#22252c;border-radius:12px"></div>
<svg style="position:absolute;left:2750px;top:1130.8px" width="48" height="48" viewBox="0 0 48 48"><path fill="none" stroke="#e0e4ea" stroke-width="4.2" stroke-linejoin="miter" d="M39.80,24.00L35.98,27.89L36.78,33.29L31.41,34.19L28.88,39.03L24.00,36.60L19.12,39.03L16.59,34.19L11.22,33.29L12.02,27.89L8.20,24.00L12.02,20.11L11.22,14.71L16.59,13.81L19.12,8.97L24.00,11.40L28.88,8.97L31.41,13.81L36.78,14.71L35.98,20.11Z"/><rect x="21.8" y="15.8" width="4.1" height="10.3" fill="#e0e4ea"/><rect x="21.8" y="29.2" width="4.1" height="3.5" fill="#e0e4ea"/></svg>
</body></html>
